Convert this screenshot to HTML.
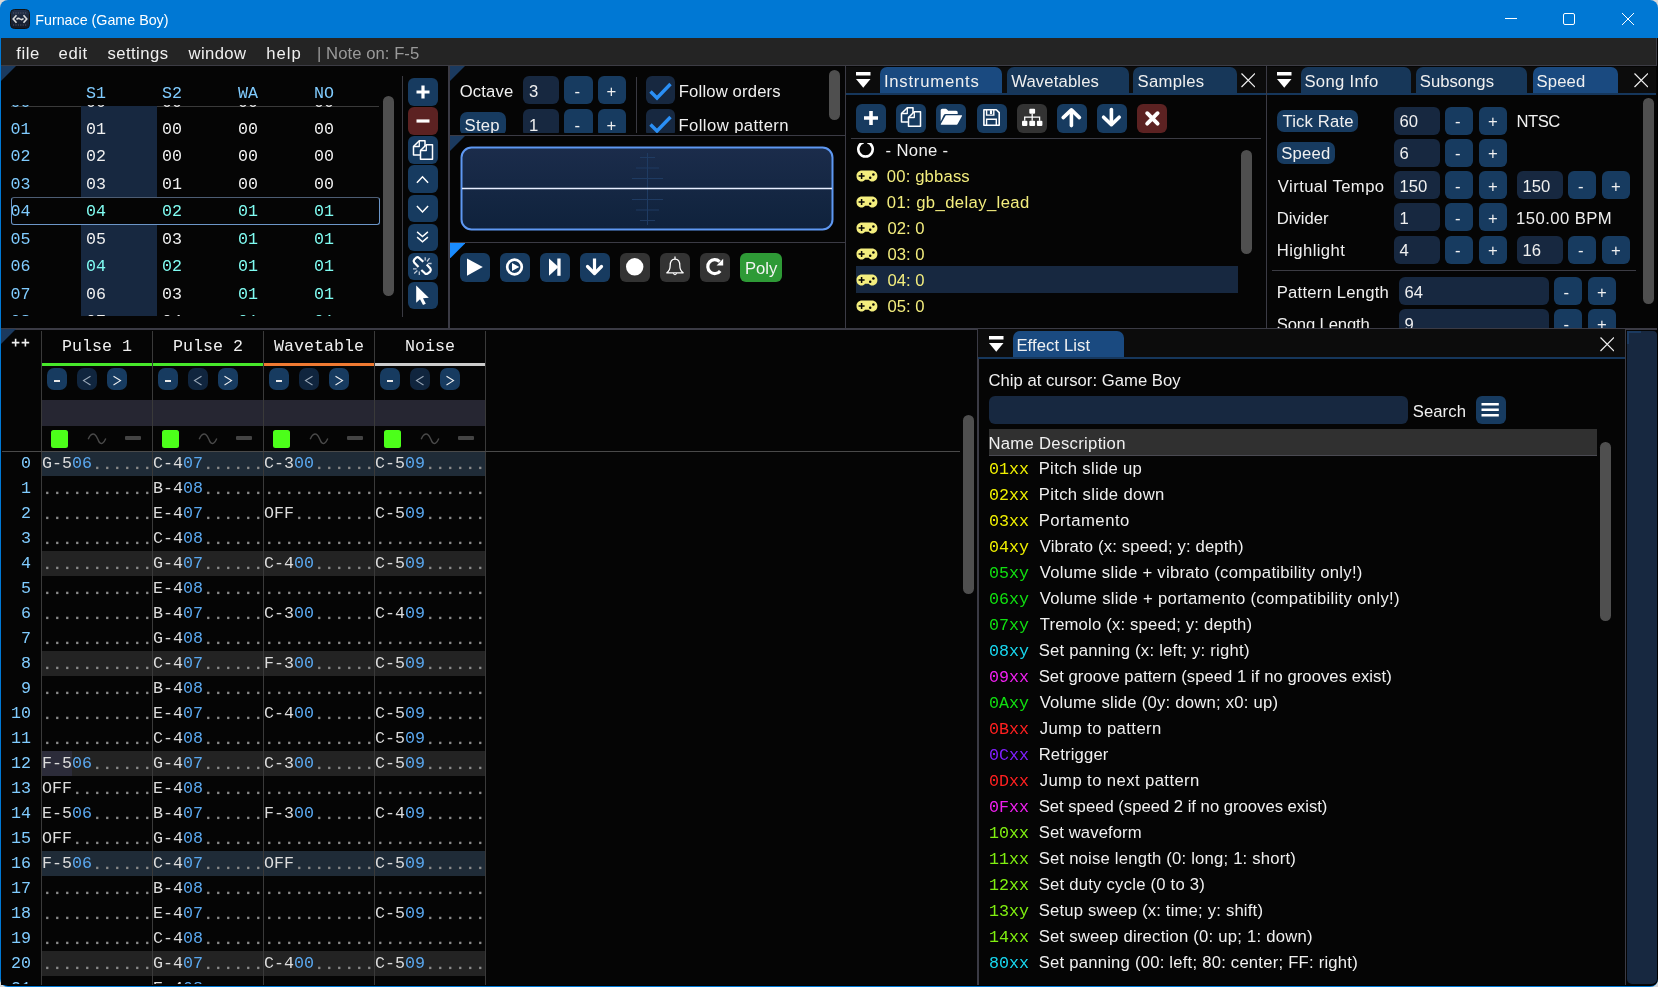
<!DOCTYPE html><html><head><meta charset="utf-8"><style>
html,body{margin:0;padding:0;width:1658px;height:987px;overflow:hidden;background:#d9d9d9}
#root{position:absolute;left:0;top:0;width:1658px;height:987px;overflow:hidden;will-change:transform;-webkit-font-smoothing:antialiased}
#root div{position:absolute;box-sizing:border-box}
.s{font-family:'Liberation Sans',sans-serif;font-size:16.67px;line-height:20px;white-space:pre}
.m{font-family:'Liberation Mono',monospace;font-size:16.67px;line-height:20px;white-space:pre}
.clip{overflow:hidden}
</style></head><body><div id="root">
<div style="left:0px;top:0px;width:1658px;height:987px;background:#0078d4;border-radius:8px;"></div>
<div style="left:1px;top:38px;width:1657px;height:947.5px;background:#000000;border-radius:0 0 7px 7px;"></div>
<div style="left:1px;top:38px;width:1656px;height:947px;background:#050505;border-radius:0 0 7px 0;"></div>
<svg style="position:absolute;left:10px;top:9px;" width="20" height="20" viewBox="0 0 20 20"><defs><linearGradient id="ig" x1="0" y1="0" x2="0" y2="1"><stop offset="0" stop-color="#22304a"/><stop offset="1" stop-color="#141a28"/></linearGradient></defs>
<rect x="0.5" y="0.5" width="19" height="19" rx="4" fill="url(#ig)" stroke="#111" stroke-width="1"/>
<path d="M6.5 6.2 L3.2 10 L6.5 13.8 M13.5 6.2 L16.8 10 L13.5 13.8" fill="none" stroke="#ddd" stroke-width="1.6"/>
<path d="M6.5 10.4 Q8.2 8.6 10 10 Q11.8 11.4 13.5 9.6" fill="none" stroke="#ddd" stroke-width="1.5"/>
<path d="M3 4 H17 M3 16 H17" stroke="#667" stroke-width="0.8" stroke-dasharray="1.2 1.2"/></svg>
<div class="s" style="left:35.3px;top:9.6px;color:#ffffff;font-size:14.3px;letter-spacing:-0.018px;">Furnace (Game Boy)</div>
<div style="left:1505px;top:18px;width:12px;height:1px;background:#ffffff;"></div>
<svg style="position:absolute;left:1562px;top:12px;" width="14" height="14" viewBox="0 0 14 14"><rect x="1.5" y="1.5" width="11" height="11" rx="1.5" fill="none" stroke="#fff" stroke-width="1"/></svg>
<svg style="position:absolute;left:1621px;top:12px;" width="14" height="14" viewBox="0 0 14 14"><path d="M1 1 L13 13 M13 1 L1 13" stroke="#fff" stroke-width="1"/></svg>
<div style="left:1px;top:38px;width:1656px;height:27px;background:#242424;"></div>
<div style="left:1px;top:65px;width:1656px;height:1px;background:#3c3c44;"></div>
<div style="left:1656px;top:38px;width:1px;height:28px;background:#3c3c44;"></div>
<div class="s" style="left:16.2px;top:43.6px;color:#f0f0f0;letter-spacing:0.600px;">file</div>
<div class="s" style="left:58.6px;top:43.6px;color:#f0f0f0;letter-spacing:0.533px;">edit</div>
<div class="s" style="left:107.4px;top:43.6px;color:#f0f0f0;letter-spacing:0.471px;">settings</div>
<div class="s" style="left:188.6px;top:43.6px;color:#f0f0f0;letter-spacing:0.360px;">window</div>
<div class="s" style="left:266.3px;top:43.6px;color:#f0f0f0;letter-spacing:0.967px;">help</div>
<div class="s" style="left:317px;top:43.6px;color:#9a9a9a;letter-spacing:0.054px;">| Note on: F-5</div>
<div style="left:448px;top:66px;width:1.5px;height:263px;background:#3b3b45;"></div>
<div style="left:844.5px;top:66px;width:1.5px;height:263px;background:#3b3b45;"></div>
<div style="left:1265.5px;top:66px;width:1.5px;height:263px;background:#3b3b45;"></div>
<div style="left:449px;top:134.5px;width:396px;height:1px;background:#3b3b45;"></div>
<div style="left:449px;top:241.5px;width:396px;height:1px;background:#3b3b45;"></div>
<div style="left:1px;top:328px;width:1656px;height:2px;background:#3b3b45;"></div>
<div style="left:977px;top:329px;width:1.8px;height:656px;background:#3b3b45;"></div>
<div style="left:1624.5px;top:329px;width:1.5px;height:656px;background:#3b3b45;"></div>
<svg style="position:absolute;left:1px;top:66px;" width="15" height="15" viewBox="0 0 15 15"><polygon points="0,0 15,0 0,15" fill="#1b3a5f"/></svg>
<div class="m" style="left:86px;top:84.0px;color:#80ccff;">S1</div>
<div class="m" style="left:162px;top:84.0px;color:#80ccff;">S2</div>
<div class="m" style="left:238px;top:84.0px;color:#80ccff;">WA</div>
<div class="m" style="left:314px;top:84.0px;color:#80ccff;">NO</div>
<div style="left:11px;top:105.5px;width:368px;height:1px;background:#3a3a3a;"></div>
<div class="clip" style="left:0px;top:105px;width:400px;height:211.3px;">
<div style="left:81px;top:1px;width:76px;height:92px;background:#172840;"></div>
<div style="left:81px;top:120px;width:76px;height:91px;background:#172840;"></div>
<div class="m" style="left:10.5px;top:-12.5px;color:#80ccff">00</div>
<div class="m" style="left:86px;top:-12.5px;color:#f0f0f0">00</div>
<div class="m" style="left:162px;top:-12.5px;color:#f0f0f0">00</div>
<div class="m" style="left:238px;top:-12.5px;color:#f0f0f0">00</div>
<div class="m" style="left:314px;top:-12.5px;color:#f0f0f0">00</div>
<div class="m" style="left:10.5px;top:15.0px;color:#80ccff">01</div>
<div class="m" style="left:86px;top:15.0px;color:#f0f0f0">01</div>
<div class="m" style="left:162px;top:15.0px;color:#f0f0f0">00</div>
<div class="m" style="left:238px;top:15.0px;color:#f0f0f0">00</div>
<div class="m" style="left:314px;top:15.0px;color:#f0f0f0">00</div>
<div class="m" style="left:10.5px;top:42.4px;color:#80ccff">02</div>
<div class="m" style="left:86px;top:42.4px;color:#f0f0f0">02</div>
<div class="m" style="left:162px;top:42.4px;color:#f0f0f0">00</div>
<div class="m" style="left:238px;top:42.4px;color:#f0f0f0">00</div>
<div class="m" style="left:314px;top:42.4px;color:#f0f0f0">00</div>
<div class="m" style="left:10.5px;top:69.9px;color:#80ccff">03</div>
<div class="m" style="left:86px;top:69.9px;color:#f0f0f0">03</div>
<div class="m" style="left:162px;top:69.9px;color:#f0f0f0">01</div>
<div class="m" style="left:238px;top:69.9px;color:#f0f0f0">00</div>
<div class="m" style="left:314px;top:69.9px;color:#f0f0f0">00</div>
<div class="m" style="left:10.5px;top:97.3px;color:#80ccff">04</div>
<div class="m" style="left:86px;top:97.3px;color:#80fcf2">04</div>
<div class="m" style="left:162px;top:97.3px;color:#80fcf2">02</div>
<div class="m" style="left:238px;top:97.3px;color:#80fcf2">01</div>
<div class="m" style="left:314px;top:97.3px;color:#80fcf2">01</div>
<div class="m" style="left:10.5px;top:124.8px;color:#80ccff">05</div>
<div class="m" style="left:86px;top:124.8px;color:#f0f0f0">05</div>
<div class="m" style="left:162px;top:124.8px;color:#f0f0f0">03</div>
<div class="m" style="left:238px;top:124.8px;color:#80fcf2">01</div>
<div class="m" style="left:314px;top:124.8px;color:#80fcf2">01</div>
<div class="m" style="left:10.5px;top:152.2px;color:#80ccff">06</div>
<div class="m" style="left:86px;top:152.2px;color:#80fcf2">04</div>
<div class="m" style="left:162px;top:152.2px;color:#80fcf2">02</div>
<div class="m" style="left:238px;top:152.2px;color:#80fcf2">01</div>
<div class="m" style="left:314px;top:152.2px;color:#80fcf2">01</div>
<div class="m" style="left:10.5px;top:179.7px;color:#80ccff">07</div>
<div class="m" style="left:86px;top:179.7px;color:#f0f0f0">06</div>
<div class="m" style="left:162px;top:179.7px;color:#f0f0f0">03</div>
<div class="m" style="left:238px;top:179.7px;color:#80fcf2">01</div>
<div class="m" style="left:314px;top:179.7px;color:#80fcf2">01</div>
<div class="m" style="left:10.5px;top:207.1px;color:#80ccff">08</div>
<div class="m" style="left:86px;top:207.1px;color:#f0f0f0">07</div>
<div class="m" style="left:162px;top:207.1px;color:#f0f0f0">04</div>
<div class="m" style="left:238px;top:207.1px;color:#80fcf2">01</div>
<div class="m" style="left:314px;top:207.1px;color:#80fcf2">01</div>
</div>
<div style="left:11px;top:197.3px;width:369px;height:27.6px;background:transparent;border-radius:3px;border:1px solid #6c96c8;border-top:1.8px solid #4d5d74;"></div>
<div style="left:383px;top:96px;width:11px;height:200px;background:#4f4f4f;border-radius:5.5px;"></div>
<div style="left:402px;top:76px;width:1px;height:241px;background:#3a3a42;"></div>
<div style="left:408.3px;top:78px;width:29.4px;height:27.6px;background:#173b60;border-radius:6px;"></div>
<div style="left:408.3px;top:107px;width:29.4px;height:27.6px;background:#5c2222;border-radius:6px;"></div>
<div style="left:408.3px;top:136px;width:29.4px;height:27.6px;background:#173b60;border-radius:6px;"></div>
<div style="left:408.3px;top:165.2px;width:29.4px;height:27.6px;background:#173b60;border-radius:6px;"></div>
<div style="left:408.3px;top:194.5px;width:29.4px;height:27.6px;background:#173b60;border-radius:6px;"></div>
<div style="left:408.3px;top:223.7px;width:29.4px;height:27.6px;background:#173b60;border-radius:6px;"></div>
<div style="left:408.3px;top:252.8px;width:29.4px;height:27.6px;background:#173b60;border-radius:6px;"></div>
<div style="left:408.3px;top:281.7px;width:29.4px;height:27.6px;background:#173b60;border-radius:6px;"></div>
<svg style="position:absolute;left:408px;top:78px;" width="30" height="28" viewBox="0 0 30 28"><path d="M15 7.5 V20.5 M8.5 14 H21.5" stroke="#fff" stroke-width="3.2"/></svg>
<svg style="position:absolute;left:408px;top:107px;" width="30" height="28" viewBox="0 0 30 28"><path d="M8.5 14 H21.5" stroke="#fff" stroke-width="3.2"/></svg>
<svg style="position:absolute;left:408px;top:136px;" width="30" height="28" viewBox="0 0 30 28"><path d="M5.5 10.5 L11.3 4.7 H17 V19 H5.5 Z" fill="none" stroke="#fff" stroke-width="1.5" stroke-linejoin="round"/><path d="M5.5 10.5 H11.3 V4.7" fill="none" stroke="#fff" stroke-width="1.3" stroke-linejoin="round"/><path d="M12.5 14.5 L18.3 8.7 H24.5 V23.3 H12.5 Z" fill="#173b60" stroke="#fff" stroke-width="1.5" stroke-linejoin="round"/><path d="M12.5 14.5 H18.3 V8.7" fill="none" stroke="#fff" stroke-width="1.3" stroke-linejoin="round"/></svg>
<svg style="position:absolute;left:408px;top:165.2px;" width="30" height="28" viewBox="0 0 30 28"><path d="M8.9 17.7 L14.5 11.8 L20.1 17.7" fill="none" stroke="#fff" stroke-width="1.5"/></svg>
<svg style="position:absolute;left:408px;top:194.5px;" width="30" height="28" viewBox="0 0 30 28"><path d="M8.9 11 L14.5 16.9 L20.1 11" fill="none" stroke="#fff" stroke-width="1.5"/></svg>
<svg style="position:absolute;left:408px;top:223.7px;" width="30" height="28" viewBox="0 0 30 28"><path d="M9.1 7.9 L14.5 12.6 L19.9 7.9 M9.1 13.1 L14.5 17.8 L19.9 13.1" fill="none" stroke="#fff" stroke-width="1.4"/></svg>
<svg style="position:absolute;left:408px;top:252.8px;" width="30" height="28" viewBox="0 0 30 28"><path d="M15.3 8.8 L11 4.9 Q9.6 3.7 8.1 4.7 L6.3 6.5 Q5.1 7.9 6.2 9.4 L10.5 13.9" fill="none" stroke="#fff" stroke-width="2.2" stroke-linejoin="round"/><path d="M18.7 11.6 L22.4 15.6 Q23.4 17.1 22.2 18.6 L19.6 20.6 Q18.2 21.4 16.9 20.3 L13.3 17" fill="none" stroke="#fff" stroke-width="2.2" stroke-linejoin="round"/><path d="M17.2 4.2 V7.4 M21.6 5.2 L19 8.5 M19.8 10.5 H23.6 M5 15.9 H8.6 M6.2 20.4 L9.4 17.6 M11.3 18.4 V21.9" stroke="#c0cad8" stroke-width="1.3"/></svg>
<svg style="position:absolute;left:408px;top:281.7px;" width="30" height="28" viewBox="0 0 30 28"><path d="M8.2 3.5 L8.2 20.8 L12 17.2 L15 23 L17.8 21.8 L15 16.2 L20.8 15.8 Z" fill="#fff"/></svg>
<svg style="position:absolute;left:449.5px;top:66px;" width="15" height="15" viewBox="0 0 15 15"><polygon points="0,0 15,0 0,15" fill="#1b3a5f"/></svg>
<div class="clip" style="left:449.5px;top:66px;width:395px;height:67.3px;">
<div class="s" style="left:10.199999999999989px;top:16.0px;color:#f0f0f0;letter-spacing:0.160px;">Octave</div>
<div style="left:73.5px;top:10px;width:36px;height:28px;background:#172840;border-radius:6px;"></div>
<div class="s" style="left:79.5px;top:16.0px;color:#f0f0f0;">3</div>
<div style="left:114.5px;top:10px;width:28.5px;height:28px;background:#173b60;border-radius:6px;"></div>
<div class="s" style="left:125.0px;top:16.0px;color:#f0f0f0;">-</div>
<div style="left:148.0px;top:10px;width:28.5px;height:28px;background:#173b60;border-radius:6px;"></div>
<div class="s" style="left:157.0px;top:16.0px;color:#f0f0f0;">+</div>
<div style="left:10.5px;top:46px;width:45.5px;height:24px;background:#173b60;border-radius:7px;"></div>
<div class="s" style="left:15.0px;top:49.5px;color:#f0f0f0;letter-spacing:0.267px;">Step</div>
<div style="left:73.5px;top:43px;width:36px;height:28px;background:#172840;border-radius:6px;"></div>
<div class="s" style="left:79.5px;top:49.5px;color:#f0f0f0;">1</div>
<div style="left:114.5px;top:43px;width:28.5px;height:28px;background:#173b60;border-radius:6px;"></div>
<div class="s" style="left:125.0px;top:49.5px;color:#f0f0f0;">-</div>
<div style="left:148.0px;top:43px;width:28.5px;height:28px;background:#173b60;border-radius:6px;"></div>
<div class="s" style="left:157.0px;top:49.5px;color:#f0f0f0;">+</div>
<div style="left:186.5px;top:11px;width:1px;height:57px;background:#3a3a42;"></div>
<div style="left:196.5px;top:10px;width:28.5px;height:28px;background:#172840;border-radius:6px;"></div>
<svg style="position:absolute;left:196.5px;top:10px" width="29" height="28"><path d="M4.5 15.5 L11 22 L24.5 8" fill="none" stroke="#2a8ff5" stroke-width="3.4"/></svg>
<div class="s" style="left:229.29999999999995px;top:16.2px;color:#f0f0f0;letter-spacing:0.150px;">Follow orders</div>
<div style="left:196.5px;top:43px;width:28.5px;height:28px;background:#172840;border-radius:6px;"></div>
<svg style="position:absolute;left:196.5px;top:43px" width="29" height="28"><path d="M4.5 15.5 L11 22 L24.5 8" fill="none" stroke="#2a8ff5" stroke-width="3.4"/></svg>
<div class="s" style="left:228.89999999999998px;top:49.5px;color:#f0f0f0;letter-spacing:0.431px;">Follow pattern</div>
<div style="left:379.5px;top:3.5px;width:11px;height:50.5px;background:#4f4f4f;border-radius:5.5px;"></div>
</div>
<svg style="position:absolute;left:449.5px;top:135.5px;" width="15" height="15" viewBox="0 0 15 15"><polygon points="0,0 15,0 0,15" fill="#1b3a5f"/></svg>
<svg style="position:absolute;left:460px;top:146px;" width="374" height="85" viewBox="0 0 374 85"><defs><linearGradient id="og" x1="0" y1="0" x2="0" y2="1"><stop offset="0" stop-color="#1b2c4b"/><stop offset="1" stop-color="#0f223c"/></linearGradient></defs>
<rect x="1.5" y="1.5" width="371" height="82" rx="10" fill="url(#og)" stroke="#5e98f2" stroke-width="2"/>
<g stroke="#1f3b62" stroke-width="1">
<path d="M187.5 7 V79"/>
<path d="M180 11.5 H195 M176 22 H199 M172 32.5 H203 M172 53.5 H203 M176 64 H199 M180 74.5 H195"/>
</g>
<path d="M2 42.5 H372" stroke="#e8eeff" stroke-width="1.6"/></svg>
<svg style="position:absolute;left:449.5px;top:242.5px;" width="15.5" height="15.5" viewBox="0 0 15.5 15.5"><polygon points="0,0 15.5,0 0,15.5" fill="#1a8cff"/></svg>
<div style="left:460px;top:253px;width:30px;height:28.5px;background:#173b60;border-radius:6px;"></div>
<div style="left:500px;top:253px;width:30px;height:28.5px;background:#173b60;border-radius:6px;"></div>
<div style="left:540px;top:253px;width:30px;height:28.5px;background:#173b60;border-radius:6px;"></div>
<div style="left:580px;top:253px;width:30px;height:28.5px;background:#173b60;border-radius:6px;"></div>
<div style="left:620px;top:253px;width:30px;height:28.5px;background:#333333;border-radius:6px;"></div>
<div style="left:660px;top:253px;width:30px;height:28.5px;background:#333333;border-radius:6px;"></div>
<div style="left:700px;top:253px;width:30px;height:28.5px;background:#333333;border-radius:6px;"></div>
<svg style="position:absolute;left:460px;top:253px;" width="30" height="28.5" viewBox="0 0 30 28.5"><path d="M7 5.5 L22.8 14 L7 22.8 Z" fill="#fff"/></svg>
<svg style="position:absolute;left:500px;top:253px;" width="30" height="28.5" viewBox="0 0 30 28.5"><circle cx="14.5" cy="14" r="7.3" fill="none" stroke="#fff" stroke-width="2.7"/><path d="M12 9.9 L19.3 14 L12 18.1 Z" fill="#fff"/></svg>
<svg style="position:absolute;left:540px;top:253px;" width="30" height="28.5" viewBox="0 0 30 28.5"><path d="M9 5.5 L18.5 14 L9 22.8 Z" fill="#fff"/><rect x="17.3" y="5.5" width="3.3" height="17.3" fill="#fff"/></svg>
<svg style="position:absolute;left:580px;top:253px;" width="30" height="28.5" viewBox="0 0 30 28.5"><path d="M14.5 5.5 V20" stroke="#fff" stroke-width="3.2"/><path d="M7.5 13.5 L14.5 20.5 L21.5 13.5" fill="none" stroke="#fff" stroke-width="3.2" stroke-linejoin="round" stroke-linecap="round"/></svg>
<svg style="position:absolute;left:620px;top:253px;" width="30" height="28.5" viewBox="0 0 30 28.5"><circle cx="14.7" cy="13.8" r="8.7" fill="#fff"/></svg>
<svg style="position:absolute;left:660px;top:253px;" width="30" height="28.5" viewBox="0 0 30 28.5"><path d="M15 6 C11.2 6 10.2 9.5 10.2 12.5 C10.2 16.2 9 18.2 6.8 19.8 H23.2 C21 18.2 19.8 16.2 19.8 12.5 C19.8 9.5 18.8 6 15 6 Z" fill="none" stroke="#fff" stroke-width="1.25" stroke-linejoin="round"/><path d="M15 3.6 V6" stroke="#fff" stroke-width="1.3"/><path d="M13.3 20.2 Q15 23.2 16.7 20.2" fill="none" stroke="#fff" stroke-width="1.1"/></svg>
<svg style="position:absolute;left:700px;top:253px;" width="30" height="28.5" viewBox="0 0 30 28.5"><path d="M20.2 17.9 A6.95 6.95 0 1 1 19.6 8.6" fill="none" stroke="#fff" stroke-width="3.2"/><path d="M23.2 5.8 V12.4 H16.6 Z" fill="#fff"/></svg>
<div style="left:740px;top:253px;width:42px;height:28.5px;background:#2e9a36;border-radius:6px;"></div>
<div class="s" style="left:745px;top:259.0px;color:#f4f4f4;">Poly</div>
<div style="left:846px;top:66.5px;width:419.5px;height:27px;background:#0c0c0c;"></div>
<svg style="position:absolute;left:856px;top:72px;" width="15" height="17" viewBox="0 0 15 17"><rect x="0" y="0" width="14.5" height="3.5" fill="#fff"/><path d="M0 7 H14.5 L7.25 15.8 Z" fill="#fff"/></svg>
<div style="left:879.5px;top:67px;width:122px;height:26.5px;background:#1a4a80;border-radius:7px 7px 0 0;"></div>
<div class="s" style="left:883.9px;top:72.0px;color:#f0f0f0;letter-spacing:0.780px;">Instruments</div>
<div style="left:1006.5px;top:67px;width:122px;height:26.5px;background:#173759;border-radius:7px 7px 0 0;"></div>
<div class="s" style="left:1011.2px;top:72.0px;color:#f0f0f0;letter-spacing:0.144px;">Wavetables</div>
<div style="left:1133px;top:67px;width:103.5px;height:26.5px;background:#173759;border-radius:7px 7px 0 0;"></div>
<div class="s" style="left:1137.5px;top:72.0px;color:#f0f0f0;letter-spacing:0.300px;">Samples</div>
<svg style="position:absolute;left:1240.7px;top:73px;" width="14.5" height="14.5" viewBox="0 0 14.5 14.5"><path d="M0.5 0.5 L14.0 14.0 M14.0 0.5 L0.5 14.0" stroke="#f0f0f0" stroke-width="1.2"/></svg>
<div style="left:846px;top:93px;width:419.5px;height:2px;background:#16375c;"></div>
<div style="left:856px;top:104.3px;width:30px;height:28.4px;background:#173b60;border-radius:6px;"></div>
<div style="left:896px;top:104.3px;width:30px;height:28.4px;background:#173b60;border-radius:6px;"></div>
<div style="left:936.2px;top:104.3px;width:30px;height:28.4px;background:#173b60;border-radius:6px;"></div>
<div style="left:977px;top:104.3px;width:30px;height:28.4px;background:#173b60;border-radius:6px;"></div>
<div style="left:1017px;top:104.3px;width:30px;height:28.4px;background:#333333;border-radius:6px;"></div>
<div style="left:1057px;top:104.3px;width:30px;height:28.4px;background:#173b60;border-radius:6px;"></div>
<div style="left:1097px;top:104.3px;width:30px;height:28.4px;background:#173b60;border-radius:6px;"></div>
<div style="left:1137px;top:104.3px;width:30px;height:28.4px;background:#5c2222;border-radius:6px;"></div>
<svg style="position:absolute;left:856px;top:104.3px;" width="30" height="28.5" viewBox="0 0 30 28.5"><path d="M15 7 V21 M8 14 H22" stroke="#fff" stroke-width="3.6"/></svg>
<svg style="position:absolute;left:896px;top:104.3px;" width="30" height="28.5" viewBox="0 0 30 28.5"><g transform="translate(0,-1)"><path d="M5.5 10.5 L11.3 4.7 H17 V19 H5.5 Z" fill="none" stroke="#fff" stroke-width="1.5" stroke-linejoin="round"/><path d="M5.5 10.5 H11.3 V4.7" fill="none" stroke="#fff" stroke-width="1.3" stroke-linejoin="round"/><path d="M12.5 14.5 L18.3 8.7 H24.5 V23.3 H12.5 Z" fill="#173b60" stroke="#fff" stroke-width="1.5" stroke-linejoin="round"/><path d="M12.5 14.5 H18.3 V8.7" fill="none" stroke="#fff" stroke-width="1.3" stroke-linejoin="round"/></g></svg>
<svg style="position:absolute;left:936.2px;top:104.3px;" width="30" height="28.5" viewBox="0 0 30 28.5"><path d="M4.7 6.3 Q4.7 4.7 6.3 4.7 H9.6 Q10.4 4.7 11 5.4 L12.2 6.8 H20.2 Q21.7 6.8 21.7 8.3 V10 H9.6 Q8.4 10 7.8 11 L4.7 17.6 Z" fill="#fff"/><path d="M9.8 11.3 H25.6 Q26.4 11.3 26 12.1 L21.6 20.1 Q21.3 20.7 20.6 20.7 H5.2 Q4.5 20.7 4.8 20.1 Z" fill="#fff"/></svg>
<svg style="position:absolute;left:977px;top:104.3px;" width="30" height="28.5" viewBox="0 0 30 28.5"><path d="M6.9 5.7 H19.3 L22.2 8.6 V21.3 H6.9 Z" fill="none" stroke="#fff" stroke-width="1.6" stroke-linejoin="round"/><path d="M9.6 5.7 V11.1 H16.8 V5.7" fill="none" stroke="#fff" stroke-width="1.4"/><rect x="12.9" y="6.2" width="2.2" height="3.8" fill="#fff"/><path d="M9.6 21.3 V15.2 H19.3 V21.3" fill="none" stroke="#fff" stroke-width="1.4"/></svg>
<svg style="position:absolute;left:1017px;top:104.3px;" width="30" height="28.5" viewBox="0 0 30 28.5"><rect x="12.3" y="4.7" width="5.8" height="5.1" rx="1" fill="#fff"/><path d="M15.2 9.8 V13.2 M7.7 16.7 V13.2 H22.6 V16.7 M15.2 13.2 V16.7" fill="none" stroke="#fff" stroke-width="1.3"/><rect x="5" y="16.7" width="5.4" height="5.4" rx="1" fill="#fff"/><rect x="12.3" y="16.7" width="5.8" height="5.4" rx="1" fill="#fff"/><rect x="19.9" y="16.7" width="5.5" height="5.4" rx="1" fill="#fff"/></svg>
<svg style="position:absolute;left:1057px;top:104.3px;" width="30" height="28.5" viewBox="0 0 30 28.5"><path d="M14.4 21.6 V7" stroke="#fff" stroke-width="3.6" stroke-linecap="round"/><path d="M6.2 13.6 L14.4 5.9 L22.4 13.6" fill="none" stroke="#fff" stroke-width="3.6" stroke-linejoin="round" stroke-linecap="round"/></svg>
<svg style="position:absolute;left:1097px;top:104.3px;" width="30" height="28.5" viewBox="0 0 30 28.5"><path d="M14.4 5.6 V20" stroke="#fff" stroke-width="3.6" stroke-linecap="round"/><path d="M6.6 13.2 L14.4 20.7 L22.2 13.2" fill="none" stroke="#fff" stroke-width="3.6" stroke-linejoin="round" stroke-linecap="round"/></svg>
<svg style="position:absolute;left:1137px;top:104.3px;" width="30" height="28.5" viewBox="0 0 30 28.5"><path d="M10.2 9.2 L20.6 19.6 M20.6 9.2 L10.2 19.6" stroke="#fff" stroke-width="3.9" stroke-linecap="round"/></svg>
<div style="left:851px;top:138px;width:409.5px;height:1px;background:#3c3c44;"></div>
<div class="clip" style="left:846px;top:143px;width:419px;height:176px;">
<div style="left:9.5px;top:123px;width:382.5px;height:27px;background:#172840;"></div>
<svg style="position:absolute;left:10px;top:-3px;" width="20" height="20" viewBox="0 0 20 20"><path d="M7.6 2.3 A7.2 7.2 0 1 0 11.4 2.3" fill="none" stroke="#fff" stroke-width="2.6"/></svg>
<div class="s" style="left:39.60000000000002px;top:-2.0px;color:#f0f0f0;letter-spacing:0.343px;">- None -</div>
<svg style="position:absolute;left:10px;top:27.19999999999999px;" width="22" height="12" viewBox="0 0 22 12"><path d="M6 0.6 H15.8 C19.2 0.6 21.4 3 21.4 6.1 C21.4 9.3 19.2 11.6 16.3 11.6 C14.6 11.6 13.6 10.6 12.8 9.7 H9 C8.2 10.6 7.2 11.6 5.5 11.6 C2.6 11.6 0.5 9.3 0.5 6.1 C0.5 3 2.7 0.6 6 0.6 Z" fill="#f4ee7e"/><path d="M2.6 6 H8.6 M5.6 3 V9" stroke="#050505" stroke-width="1.5"/><circle cx="14.2" cy="7.7" r="1.25" fill="#050505"/><circle cx="17.4" cy="4.5" r="1.25" fill="#050505"/></svg>
<div class="s" style="left:40.799999999999955px;top:24.0px;color:#f4ee7e;letter-spacing:0.156px;">00: gbbass</div>
<svg style="position:absolute;left:10px;top:53.19999999999999px;" width="22" height="12" viewBox="0 0 22 12"><path d="M6 0.6 H15.8 C19.2 0.6 21.4 3 21.4 6.1 C21.4 9.3 19.2 11.6 16.3 11.6 C14.6 11.6 13.6 10.6 12.8 9.7 H9 C8.2 10.6 7.2 11.6 5.5 11.6 C2.6 11.6 0.5 9.3 0.5 6.1 C0.5 3 2.7 0.6 6 0.6 Z" fill="#f4ee7e"/><path d="M2.6 6 H8.6 M5.6 3 V9" stroke="#050505" stroke-width="1.5"/><circle cx="14.2" cy="7.7" r="1.25" fill="#050505"/><circle cx="17.4" cy="4.5" r="1.25" fill="#050505"/></svg>
<div class="s" style="left:40.799999999999955px;top:50.0px;color:#f4ee7e;letter-spacing:0.394px;">01: gb_delay_lead</div>
<svg style="position:absolute;left:10px;top:79.19999999999999px;" width="22" height="12" viewBox="0 0 22 12"><path d="M6 0.6 H15.8 C19.2 0.6 21.4 3 21.4 6.1 C21.4 9.3 19.2 11.6 16.3 11.6 C14.6 11.6 13.6 10.6 12.8 9.7 H9 C8.2 10.6 7.2 11.6 5.5 11.6 C2.6 11.6 0.5 9.3 0.5 6.1 C0.5 3 2.7 0.6 6 0.6 Z" fill="#f4ee7e"/><path d="M2.6 6 H8.6 M5.6 3 V9" stroke="#050505" stroke-width="1.5"/><circle cx="14.2" cy="7.7" r="1.25" fill="#050505"/><circle cx="17.4" cy="4.5" r="1.25" fill="#050505"/></svg>
<div class="s" style="left:41.5px;top:76.0px;color:#f4ee7e;">02: 0</div>
<svg style="position:absolute;left:10px;top:105.19999999999999px;" width="22" height="12" viewBox="0 0 22 12"><path d="M6 0.6 H15.8 C19.2 0.6 21.4 3 21.4 6.1 C21.4 9.3 19.2 11.6 16.3 11.6 C14.6 11.6 13.6 10.6 12.8 9.7 H9 C8.2 10.6 7.2 11.6 5.5 11.6 C2.6 11.6 0.5 9.3 0.5 6.1 C0.5 3 2.7 0.6 6 0.6 Z" fill="#f4ee7e"/><path d="M2.6 6 H8.6 M5.6 3 V9" stroke="#050505" stroke-width="1.5"/><circle cx="14.2" cy="7.7" r="1.25" fill="#050505"/><circle cx="17.4" cy="4.5" r="1.25" fill="#050505"/></svg>
<div class="s" style="left:41.5px;top:102.0px;color:#f4ee7e;">03: 0</div>
<svg style="position:absolute;left:10px;top:131.2px;" width="22" height="12" viewBox="0 0 22 12"><path d="M6 0.6 H15.8 C19.2 0.6 21.4 3 21.4 6.1 C21.4 9.3 19.2 11.6 16.3 11.6 C14.6 11.6 13.6 10.6 12.8 9.7 H9 C8.2 10.6 7.2 11.6 5.5 11.6 C2.6 11.6 0.5 9.3 0.5 6.1 C0.5 3 2.7 0.6 6 0.6 Z" fill="#f4ee7e"/><path d="M2.6 6 H8.6 M5.6 3 V9" stroke="#050505" stroke-width="1.5"/><circle cx="14.2" cy="7.7" r="1.25" fill="#050505"/><circle cx="17.4" cy="4.5" r="1.25" fill="#050505"/></svg>
<div class="s" style="left:41.5px;top:128.0px;color:#f4ee7e;">04: 0</div>
<svg style="position:absolute;left:10px;top:157.2px;" width="22" height="12" viewBox="0 0 22 12"><path d="M6 0.6 H15.8 C19.2 0.6 21.4 3 21.4 6.1 C21.4 9.3 19.2 11.6 16.3 11.6 C14.6 11.6 13.6 10.6 12.8 9.7 H9 C8.2 10.6 7.2 11.6 5.5 11.6 C2.6 11.6 0.5 9.3 0.5 6.1 C0.5 3 2.7 0.6 6 0.6 Z" fill="#f4ee7e"/><path d="M2.6 6 H8.6 M5.6 3 V9" stroke="#050505" stroke-width="1.5"/><circle cx="14.2" cy="7.7" r="1.25" fill="#050505"/><circle cx="17.4" cy="4.5" r="1.25" fill="#050505"/></svg>
<div class="s" style="left:41.5px;top:154.0px;color:#f4ee7e;">05: 0</div>
<svg style="position:absolute;left:10px;top:183.2px;" width="22" height="12" viewBox="0 0 22 12"><path d="M6 0.6 H15.8 C19.2 0.6 21.4 3 21.4 6.1 C21.4 9.3 19.2 11.6 16.3 11.6 C14.6 11.6 13.6 10.6 12.8 9.7 H9 C8.2 10.6 7.2 11.6 5.5 11.6 C2.6 11.6 0.5 9.3 0.5 6.1 C0.5 3 2.7 0.6 6 0.6 Z" fill="#f4ee7e"/><path d="M2.6 6 H8.6 M5.6 3 V9" stroke="#050505" stroke-width="1.5"/><circle cx="14.2" cy="7.7" r="1.25" fill="#050505"/><circle cx="17.4" cy="4.5" r="1.25" fill="#050505"/></svg>
<div class="s" style="left:41.5px;top:180.0px;color:#f4ee7e;">06: 0</div>
</div>
<div style="left:1241px;top:150px;width:11px;height:103.5px;background:#4f4f4f;border-radius:5.5px;"></div>
<div style="left:1267px;top:66.5px;width:389px;height:27px;background:#0c0c0c;"></div>
<svg style="position:absolute;left:1277px;top:72.3px;" width="15" height="17" viewBox="0 0 15 17"><rect x="0" y="0" width="14.5" height="3.5" fill="#fff"/><path d="M0 7 H14.5 L7.25 15.8 Z" fill="#fff"/></svg>
<div style="left:1300.5px;top:67px;width:110.5px;height:26.5px;background:#173759;border-radius:7px 7px 0 0;"></div>
<div class="s" style="left:1304.4px;top:72.0px;color:#f0f0f0;letter-spacing:0.325px;">Song Info</div>
<div style="left:1415.5px;top:67px;width:111.5px;height:26.5px;background:#173759;border-radius:7px 7px 0 0;"></div>
<div class="s" style="left:1419.8px;top:72.0px;color:#f0f0f0;letter-spacing:0.014px;">Subsongs</div>
<div style="left:1532.5px;top:67px;width:85.5px;height:26.5px;background:#1a4a80;border-radius:7px 7px 0 0;"></div>
<div class="s" style="left:1536.6px;top:72.0px;color:#f0f0f0;letter-spacing:0.100px;">Speed</div>
<svg style="position:absolute;left:1633.5px;top:73.2px;" width="14.5" height="14.5" viewBox="0 0 14.5 14.5"><path d="M0.5 0.5 L14.0 14.0 M14.0 0.5 L0.5 14.0" stroke="#f0f0f0" stroke-width="1.2"/></svg>
<div style="left:1267px;top:93px;width:389px;height:2px;background:#16375c;"></div>
<div class="clip" style="left:1267px;top:95px;width:390px;height:232.5px;">
<div style="left:10px;top:14.700000000000003px;width:81px;height:22.5px;background:#173b60;border-radius:7px;"></div>
<div class="s" style="left:15.5px;top:17.2px;color:#f0f0f0;letter-spacing:0.150px;">Tick Rate</div>
<div style="left:127px;top:11.700000000000003px;width:46px;height:28px;background:#172840;border-radius:6px;"></div>
<div class="s" style="left:132.5px;top:17.2px;color:#f0f0f0;">60</div>
<div style="left:178.29999999999995px;top:11.700000000000003px;width:28px;height:28px;background:#173b60;border-radius:6px;"></div>
<div class="s" style="left:188px;top:17.2px;color:#f0f0f0;">-</div>
<div style="left:211.79999999999995px;top:11.700000000000003px;width:28px;height:28px;background:#173b60;border-radius:6px;"></div>
<div class="s" style="left:221px;top:17.2px;color:#f0f0f0;">+</div>
<div class="s" style="left:249.5999999999999px;top:17.2px;color:#f0f0f0;letter-spacing:-0.533px;">NTSC</div>
<div style="left:10px;top:46.94999999999999px;width:58px;height:22.5px;background:#173b60;border-radius:7px;"></div>
<div class="s" style="left:14.200000000000045px;top:49.4px;color:#f0f0f0;letter-spacing:0.250px;">Speed</div>
<div style="left:127px;top:43.94999999999999px;width:46px;height:28px;background:#172840;border-radius:6px;"></div>
<div class="s" style="left:132.5px;top:49.4px;color:#f0f0f0;">6</div>
<div style="left:178.29999999999995px;top:43.94999999999999px;width:28px;height:28px;background:#173b60;border-radius:6px;"></div>
<div class="s" style="left:188px;top:49.4px;color:#f0f0f0;">-</div>
<div style="left:211.79999999999995px;top:43.94999999999999px;width:28px;height:28px;background:#173b60;border-radius:6px;"></div>
<div class="s" style="left:221px;top:49.4px;color:#f0f0f0;">+</div>
<div class="s" style="left:10.799999999999955px;top:81.7px;color:#f0f0f0;letter-spacing:0.425px;">Virtual Tempo</div>
<div style="left:127px;top:76.19999999999999px;width:46px;height:28px;background:#172840;border-radius:6px;"></div>
<div class="s" style="left:132.5px;top:81.7px;color:#f0f0f0;">150</div>
<div style="left:178.29999999999995px;top:76.19999999999999px;width:28px;height:28px;background:#173b60;border-radius:6px;"></div>
<div class="s" style="left:188px;top:81.7px;color:#f0f0f0;">-</div>
<div style="left:211.79999999999995px;top:76.19999999999999px;width:28px;height:28px;background:#173b60;border-radius:6px;"></div>
<div class="s" style="left:221px;top:81.7px;color:#f0f0f0;">+</div>
<div style="left:250px;top:76.19999999999999px;width:45.5px;height:28px;background:#172840;border-radius:6px;"></div>
<div class="s" style="left:255.5px;top:81.7px;color:#f0f0f0;">150</div>
<div style="left:301.29999999999995px;top:76.19999999999999px;width:28px;height:28px;background:#173b60;border-radius:6px;"></div>
<div class="s" style="left:311px;top:81.7px;color:#f0f0f0;">-</div>
<div style="left:335px;top:76.19999999999999px;width:28px;height:28px;background:#173b60;border-radius:6px;"></div>
<div class="s" style="left:344px;top:81.7px;color:#f0f0f0;">+</div>
<div class="s" style="left:9.799999999999955px;top:113.9px;color:#f0f0f0;">Divider</div>
<div style="left:127px;top:108.44999999999999px;width:46px;height:28px;background:#172840;border-radius:6px;"></div>
<div class="s" style="left:132.5px;top:113.9px;color:#f0f0f0;">1</div>
<div style="left:178.29999999999995px;top:108.44999999999999px;width:28px;height:28px;background:#173b60;border-radius:6px;"></div>
<div class="s" style="left:188px;top:113.9px;color:#f0f0f0;">-</div>
<div style="left:211.79999999999995px;top:108.44999999999999px;width:28px;height:28px;background:#173b60;border-radius:6px;"></div>
<div class="s" style="left:221px;top:113.9px;color:#f0f0f0;">+</div>
<div class="s" style="left:249.0999999999999px;top:113.9px;color:#f0f0f0;letter-spacing:0.433px;">150.00 BPM</div>
<div class="s" style="left:9.799999999999955px;top:146.2px;color:#f0f0f0;letter-spacing:0.400px;">Highlight</div>
<div style="left:127px;top:140.7px;width:46px;height:28px;background:#172840;border-radius:6px;"></div>
<div class="s" style="left:132.5px;top:146.2px;color:#f0f0f0;">4</div>
<div style="left:178.29999999999995px;top:140.7px;width:28px;height:28px;background:#173b60;border-radius:6px;"></div>
<div class="s" style="left:188px;top:146.2px;color:#f0f0f0;">-</div>
<div style="left:211.79999999999995px;top:140.7px;width:28px;height:28px;background:#173b60;border-radius:6px;"></div>
<div class="s" style="left:221px;top:146.2px;color:#f0f0f0;">+</div>
<div style="left:250px;top:140.7px;width:45.5px;height:28px;background:#172840;border-radius:6px;"></div>
<div class="s" style="left:255.5px;top:146.2px;color:#f0f0f0;">16</div>
<div style="left:301.29999999999995px;top:140.7px;width:28px;height:28px;background:#173b60;border-radius:6px;"></div>
<div class="s" style="left:311px;top:146.2px;color:#f0f0f0;">-</div>
<div style="left:335px;top:140.7px;width:28px;height:28px;background:#173b60;border-radius:6px;"></div>
<div class="s" style="left:344px;top:146.2px;color:#f0f0f0;">+</div>
<div style="left:5px;top:175px;width:364px;height:1px;background:#3c3c44;"></div>
<div class="s" style="left:9.799999999999955px;top:187.5px;color:#f0f0f0;letter-spacing:0.215px;">Pattern Length</div>
<div style="left:132px;top:182px;width:149.5px;height:28px;background:#172840;border-radius:6px;"></div>
<div class="s" style="left:137.5px;top:187.5px;color:#f0f0f0;">64</div>
<div style="left:287px;top:182px;width:28px;height:28px;background:#173b60;border-radius:6px;"></div>
<div class="s" style="left:296.5px;top:187.5px;color:#f0f0f0;">-</div>
<div style="left:320.70000000000005px;top:182px;width:28px;height:28px;background:#173b60;border-radius:6px;"></div>
<div class="s" style="left:330px;top:187.5px;color:#f0f0f0;">+</div>
<div class="s" style="left:9.799999999999955px;top:219.7px;color:#f0f0f0;letter-spacing:-0.150px;">Song Length</div>
<div style="left:132px;top:214.2px;width:149.5px;height:28px;background:#172840;border-radius:6px;"></div>
<div class="s" style="left:137.5px;top:219.7px;color:#f0f0f0;">9</div>
<div style="left:287px;top:214.2px;width:28px;height:28px;background:#173b60;border-radius:6px;"></div>
<div class="s" style="left:296.5px;top:219.7px;color:#f0f0f0;">-</div>
<div style="left:320.70000000000005px;top:214.2px;width:28px;height:28px;background:#173b60;border-radius:6px;"></div>
<div class="s" style="left:330px;top:219.7px;color:#f0f0f0;">+</div>
</div>
<div style="left:1643px;top:97.5px;width:10.5px;height:206px;background:#4f4f4f;border-radius:5.25px;"></div>
<svg style="position:absolute;left:1px;top:329px;" width="15" height="15" viewBox="0 0 15 15"><polygon points="0,0 15,0 0,15" fill="#1b3a5f"/></svg>
<svg style="position:absolute;left:11px;top:338px;" width="20" height="10" viewBox="0 0 20 10"><path d="M0.8 4.6 H8.4 M4.6 0.8 V8.4 M10.6 4.6 H18.2 M14.4 0.8 V8.4" stroke="#f0f0f0" stroke-width="1.6"/></svg>
<div class="m" style="left:62px;top:337.4px;color:#f0f0f0;">Pulse 1</div>
<div style="left:42px;top:363px;width:110.5px;height:2.7px;background:#47e82a;"></div>
<div style="left:47px;top:368.3px;width:20px;height:22px;background:#173b60;border-radius:7px;"></div>
<div style="left:54px;top:380px;width:6px;height:2px;background:#e8e8e8;"></div>
<div style="left:77px;top:368.3px;width:20px;height:22px;background:#10253e;border-radius:7px;"></div>
<div style="left:107px;top:368.3px;width:20px;height:22px;background:#173b60;border-radius:7px;"></div>
<svg style="position:absolute;left:77px;top:368.3px;" width="20" height="22" viewBox="0 0 20 22"><path d="M13.5 8.2 L6.5 12.6 L13.5 17" fill="none" stroke="#9aa8b8" stroke-width="1.1"/></svg>
<svg style="position:absolute;left:107px;top:368.3px;" width="20" height="22" viewBox="0 0 20 22"><path d="M6.5 8.2 L13.5 12.6 L6.5 17" fill="none" stroke="#f0f0f0" stroke-width="1.1"/></svg>
<div style="left:42px;top:400px;width:110.5px;height:26px;background:#262632;"></div>
<div style="left:51px;top:430px;width:17px;height:17.5px;background:#4cff1a;border-radius:2.5px;"></div>
<svg style="position:absolute;left:87px;top:432px;" width="21" height="14" viewBox="0 0 21 14"><path d="M1.2 7.2 C3 2.5 5.5 1.2 7.6 2.4 C9.6 3.6 10.5 6.5 11.4 8.6 C12.4 11 14 12 15.6 11.2 C17 10.5 18 8.5 18.8 6.6" fill="none" stroke="#4a4a4a" stroke-width="1.4"/></svg>
<div style="left:125px;top:436.3px;width:16px;height:4px;background:#444444;border-radius:1px;"></div>
<div class="m" style="left:173px;top:337.4px;color:#f0f0f0;">Pulse 2</div>
<div style="left:153px;top:363px;width:110.5px;height:2.7px;background:#47e82a;"></div>
<div style="left:158px;top:368.3px;width:20px;height:22px;background:#173b60;border-radius:7px;"></div>
<div style="left:165px;top:380px;width:6px;height:2px;background:#e8e8e8;"></div>
<div style="left:188px;top:368.3px;width:20px;height:22px;background:#10253e;border-radius:7px;"></div>
<div style="left:218px;top:368.3px;width:20px;height:22px;background:#173b60;border-radius:7px;"></div>
<svg style="position:absolute;left:188px;top:368.3px;" width="20" height="22" viewBox="0 0 20 22"><path d="M13.5 8.2 L6.5 12.6 L13.5 17" fill="none" stroke="#9aa8b8" stroke-width="1.1"/></svg>
<svg style="position:absolute;left:218px;top:368.3px;" width="20" height="22" viewBox="0 0 20 22"><path d="M6.5 8.2 L13.5 12.6 L6.5 17" fill="none" stroke="#f0f0f0" stroke-width="1.1"/></svg>
<div style="left:153px;top:400px;width:110.5px;height:26px;background:#262632;"></div>
<div style="left:162px;top:430px;width:17px;height:17.5px;background:#4cff1a;border-radius:2.5px;"></div>
<svg style="position:absolute;left:198px;top:432px;" width="21" height="14" viewBox="0 0 21 14"><path d="M1.2 7.2 C3 2.5 5.5 1.2 7.6 2.4 C9.6 3.6 10.5 6.5 11.4 8.6 C12.4 11 14 12 15.6 11.2 C17 10.5 18 8.5 18.8 6.6" fill="none" stroke="#4a4a4a" stroke-width="1.4"/></svg>
<div style="left:236px;top:436.3px;width:16px;height:4px;background:#444444;border-radius:1px;"></div>
<div class="m" style="left:274px;top:337.4px;color:#f0f0f0;">Wavetable</div>
<div style="left:264px;top:363px;width:110.5px;height:2.7px;background:#f07a32;"></div>
<div style="left:269px;top:368.3px;width:20px;height:22px;background:#173b60;border-radius:7px;"></div>
<div style="left:276px;top:380px;width:6px;height:2px;background:#e8e8e8;"></div>
<div style="left:299px;top:368.3px;width:20px;height:22px;background:#10253e;border-radius:7px;"></div>
<div style="left:329px;top:368.3px;width:20px;height:22px;background:#173b60;border-radius:7px;"></div>
<svg style="position:absolute;left:299px;top:368.3px;" width="20" height="22" viewBox="0 0 20 22"><path d="M13.5 8.2 L6.5 12.6 L13.5 17" fill="none" stroke="#9aa8b8" stroke-width="1.1"/></svg>
<svg style="position:absolute;left:329px;top:368.3px;" width="20" height="22" viewBox="0 0 20 22"><path d="M6.5 8.2 L13.5 12.6 L6.5 17" fill="none" stroke="#f0f0f0" stroke-width="1.1"/></svg>
<div style="left:264px;top:400px;width:110.5px;height:26px;background:#262632;"></div>
<div style="left:273px;top:430px;width:17px;height:17.5px;background:#4cff1a;border-radius:2.5px;"></div>
<svg style="position:absolute;left:309px;top:432px;" width="21" height="14" viewBox="0 0 21 14"><path d="M1.2 7.2 C3 2.5 5.5 1.2 7.6 2.4 C9.6 3.6 10.5 6.5 11.4 8.6 C12.4 11 14 12 15.6 11.2 C17 10.5 18 8.5 18.8 6.6" fill="none" stroke="#4a4a4a" stroke-width="1.4"/></svg>
<div style="left:347px;top:436.3px;width:16px;height:4px;background:#444444;border-radius:1px;"></div>
<div class="m" style="left:405px;top:337.4px;color:#f0f0f0;">Noise</div>
<div style="left:375px;top:363px;width:110.5px;height:2.7px;background:#cccccc;"></div>
<div style="left:380px;top:368.3px;width:20px;height:22px;background:#173b60;border-radius:7px;"></div>
<div style="left:387px;top:380px;width:6px;height:2px;background:#e8e8e8;"></div>
<div style="left:410px;top:368.3px;width:20px;height:22px;background:#10253e;border-radius:7px;"></div>
<div style="left:440px;top:368.3px;width:20px;height:22px;background:#173b60;border-radius:7px;"></div>
<svg style="position:absolute;left:410px;top:368.3px;" width="20" height="22" viewBox="0 0 20 22"><path d="M13.5 8.2 L6.5 12.6 L13.5 17" fill="none" stroke="#9aa8b8" stroke-width="1.1"/></svg>
<svg style="position:absolute;left:440px;top:368.3px;" width="20" height="22" viewBox="0 0 20 22"><path d="M6.5 8.2 L13.5 12.6 L6.5 17" fill="none" stroke="#f0f0f0" stroke-width="1.1"/></svg>
<div style="left:375px;top:400px;width:110.5px;height:26px;background:#262632;"></div>
<div style="left:384px;top:430px;width:17px;height:17.5px;background:#4cff1a;border-radius:2.5px;"></div>
<svg style="position:absolute;left:420px;top:432px;" width="21" height="14" viewBox="0 0 21 14"><path d="M1.2 7.2 C3 2.5 5.5 1.2 7.6 2.4 C9.6 3.6 10.5 6.5 11.4 8.6 C12.4 11 14 12 15.6 11.2 C17 10.5 18 8.5 18.8 6.6" fill="none" stroke="#4a4a4a" stroke-width="1.4"/></svg>
<div style="left:458px;top:436.3px;width:16px;height:4px;background:#444444;border-radius:1px;"></div>
<div style="left:41px;top:331px;width:1px;height:654px;background:#3a3a3a;"></div>
<div style="left:152px;top:331px;width:1px;height:654px;background:#3a3a3a;"></div>
<div style="left:263px;top:331px;width:1px;height:654px;background:#3a3a3a;"></div>
<div style="left:374px;top:331px;width:1px;height:654px;background:#3a3a3a;"></div>
<div style="left:485px;top:331px;width:1px;height:654px;background:#3a3a3a;"></div>
<div style="left:2px;top:451px;width:958px;height:1px;background:#4a4a4a;"></div>
<div class="clip" style="left:1px;top:452px;width:960px;height:532px;">
<div style="left:41px;top:-1px;width:443.5px;height:25px;background:#1f2b37;"></div>
<div class="m" style="left:20px;top:2.2px;color:#80ccff">0</div>
<div class="m" style="left:41px;top:2.2px;color:#dcdcdc">G-5<span style="color:#5aa8f0">06</span></div>
<svg style="position:absolute;left:41px;top:-1px" width="110" height="25"><rect x="54.1" y="15.7" width="2.3" height="2.4" fill="#8a8a8a"/><rect x="64.1" y="15.7" width="2.3" height="2.4" fill="#8a8a8a"/><rect x="74.1" y="15.7" width="2.3" height="2.4" fill="#8a8a8a"/><rect x="84.1" y="15.7" width="2.3" height="2.4" fill="#8a8a8a"/><rect x="94.1" y="15.7" width="2.3" height="2.4" fill="#8a8a8a"/><rect x="104.1" y="15.7" width="2.3" height="2.4" fill="#8a8a8a"/></svg>
<div class="m" style="left:152px;top:2.2px;color:#dcdcdc">C-4<span style="color:#5aa8f0">07</span></div>
<svg style="position:absolute;left:152px;top:-1px" width="110" height="25"><rect x="54.1" y="15.7" width="2.3" height="2.4" fill="#8a8a8a"/><rect x="64.1" y="15.7" width="2.3" height="2.4" fill="#8a8a8a"/><rect x="74.1" y="15.7" width="2.3" height="2.4" fill="#8a8a8a"/><rect x="84.1" y="15.7" width="2.3" height="2.4" fill="#8a8a8a"/><rect x="94.1" y="15.7" width="2.3" height="2.4" fill="#8a8a8a"/><rect x="104.1" y="15.7" width="2.3" height="2.4" fill="#8a8a8a"/></svg>
<div class="m" style="left:263px;top:2.2px;color:#dcdcdc">C-3<span style="color:#5aa8f0">00</span></div>
<svg style="position:absolute;left:263px;top:-1px" width="110" height="25"><rect x="54.1" y="15.7" width="2.3" height="2.4" fill="#8a8a8a"/><rect x="64.1" y="15.7" width="2.3" height="2.4" fill="#8a8a8a"/><rect x="74.1" y="15.7" width="2.3" height="2.4" fill="#8a8a8a"/><rect x="84.1" y="15.7" width="2.3" height="2.4" fill="#8a8a8a"/><rect x="94.1" y="15.7" width="2.3" height="2.4" fill="#8a8a8a"/><rect x="104.1" y="15.7" width="2.3" height="2.4" fill="#8a8a8a"/></svg>
<div class="m" style="left:374px;top:2.2px;color:#dcdcdc">C-5<span style="color:#5aa8f0">09</span></div>
<svg style="position:absolute;left:374px;top:-1px" width="110" height="25"><rect x="54.1" y="15.7" width="2.3" height="2.4" fill="#8a8a8a"/><rect x="64.1" y="15.7" width="2.3" height="2.4" fill="#8a8a8a"/><rect x="74.1" y="15.7" width="2.3" height="2.4" fill="#8a8a8a"/><rect x="84.1" y="15.7" width="2.3" height="2.4" fill="#8a8a8a"/><rect x="94.1" y="15.7" width="2.3" height="2.4" fill="#8a8a8a"/><rect x="104.1" y="15.7" width="2.3" height="2.4" fill="#8a8a8a"/></svg>
<div class="m" style="left:20px;top:27.2px;color:#80ccff">1</div>
<svg style="position:absolute;left:41px;top:24px" width="110" height="25"><rect x="4.1" y="15.7" width="2.3" height="2.4" fill="#8a8a8a"/><rect x="14.1" y="15.7" width="2.3" height="2.4" fill="#8a8a8a"/><rect x="24.1" y="15.7" width="2.3" height="2.4" fill="#8a8a8a"/><rect x="34.1" y="15.7" width="2.3" height="2.4" fill="#8a8a8a"/><rect x="44.1" y="15.7" width="2.3" height="2.4" fill="#8a8a8a"/><rect x="54.1" y="15.7" width="2.3" height="2.4" fill="#8a8a8a"/><rect x="64.1" y="15.7" width="2.3" height="2.4" fill="#8a8a8a"/><rect x="74.1" y="15.7" width="2.3" height="2.4" fill="#8a8a8a"/><rect x="84.1" y="15.7" width="2.3" height="2.4" fill="#8a8a8a"/><rect x="94.1" y="15.7" width="2.3" height="2.4" fill="#8a8a8a"/><rect x="104.1" y="15.7" width="2.3" height="2.4" fill="#8a8a8a"/></svg>
<div class="m" style="left:152px;top:27.2px;color:#dcdcdc">B-4<span style="color:#5aa8f0">08</span></div>
<svg style="position:absolute;left:152px;top:24px" width="110" height="25"><rect x="54.1" y="15.7" width="2.3" height="2.4" fill="#8a8a8a"/><rect x="64.1" y="15.7" width="2.3" height="2.4" fill="#8a8a8a"/><rect x="74.1" y="15.7" width="2.3" height="2.4" fill="#8a8a8a"/><rect x="84.1" y="15.7" width="2.3" height="2.4" fill="#8a8a8a"/><rect x="94.1" y="15.7" width="2.3" height="2.4" fill="#8a8a8a"/><rect x="104.1" y="15.7" width="2.3" height="2.4" fill="#8a8a8a"/></svg>
<svg style="position:absolute;left:263px;top:24px" width="110" height="25"><rect x="4.1" y="15.7" width="2.3" height="2.4" fill="#8a8a8a"/><rect x="14.1" y="15.7" width="2.3" height="2.4" fill="#8a8a8a"/><rect x="24.1" y="15.7" width="2.3" height="2.4" fill="#8a8a8a"/><rect x="34.1" y="15.7" width="2.3" height="2.4" fill="#8a8a8a"/><rect x="44.1" y="15.7" width="2.3" height="2.4" fill="#8a8a8a"/><rect x="54.1" y="15.7" width="2.3" height="2.4" fill="#8a8a8a"/><rect x="64.1" y="15.7" width="2.3" height="2.4" fill="#8a8a8a"/><rect x="74.1" y="15.7" width="2.3" height="2.4" fill="#8a8a8a"/><rect x="84.1" y="15.7" width="2.3" height="2.4" fill="#8a8a8a"/><rect x="94.1" y="15.7" width="2.3" height="2.4" fill="#8a8a8a"/><rect x="104.1" y="15.7" width="2.3" height="2.4" fill="#8a8a8a"/></svg>
<svg style="position:absolute;left:374px;top:24px" width="110" height="25"><rect x="4.1" y="15.7" width="2.3" height="2.4" fill="#8a8a8a"/><rect x="14.1" y="15.7" width="2.3" height="2.4" fill="#8a8a8a"/><rect x="24.1" y="15.7" width="2.3" height="2.4" fill="#8a8a8a"/><rect x="34.1" y="15.7" width="2.3" height="2.4" fill="#8a8a8a"/><rect x="44.1" y="15.7" width="2.3" height="2.4" fill="#8a8a8a"/><rect x="54.1" y="15.7" width="2.3" height="2.4" fill="#8a8a8a"/><rect x="64.1" y="15.7" width="2.3" height="2.4" fill="#8a8a8a"/><rect x="74.1" y="15.7" width="2.3" height="2.4" fill="#8a8a8a"/><rect x="84.1" y="15.7" width="2.3" height="2.4" fill="#8a8a8a"/><rect x="94.1" y="15.7" width="2.3" height="2.4" fill="#8a8a8a"/><rect x="104.1" y="15.7" width="2.3" height="2.4" fill="#8a8a8a"/></svg>
<div class="m" style="left:20px;top:52.2px;color:#80ccff">2</div>
<svg style="position:absolute;left:41px;top:49px" width="110" height="25"><rect x="4.1" y="15.7" width="2.3" height="2.4" fill="#8a8a8a"/><rect x="14.1" y="15.7" width="2.3" height="2.4" fill="#8a8a8a"/><rect x="24.1" y="15.7" width="2.3" height="2.4" fill="#8a8a8a"/><rect x="34.1" y="15.7" width="2.3" height="2.4" fill="#8a8a8a"/><rect x="44.1" y="15.7" width="2.3" height="2.4" fill="#8a8a8a"/><rect x="54.1" y="15.7" width="2.3" height="2.4" fill="#8a8a8a"/><rect x="64.1" y="15.7" width="2.3" height="2.4" fill="#8a8a8a"/><rect x="74.1" y="15.7" width="2.3" height="2.4" fill="#8a8a8a"/><rect x="84.1" y="15.7" width="2.3" height="2.4" fill="#8a8a8a"/><rect x="94.1" y="15.7" width="2.3" height="2.4" fill="#8a8a8a"/><rect x="104.1" y="15.7" width="2.3" height="2.4" fill="#8a8a8a"/></svg>
<div class="m" style="left:152px;top:52.2px;color:#dcdcdc">E-4<span style="color:#5aa8f0">07</span></div>
<svg style="position:absolute;left:152px;top:49px" width="110" height="25"><rect x="54.1" y="15.7" width="2.3" height="2.4" fill="#8a8a8a"/><rect x="64.1" y="15.7" width="2.3" height="2.4" fill="#8a8a8a"/><rect x="74.1" y="15.7" width="2.3" height="2.4" fill="#8a8a8a"/><rect x="84.1" y="15.7" width="2.3" height="2.4" fill="#8a8a8a"/><rect x="94.1" y="15.7" width="2.3" height="2.4" fill="#8a8a8a"/><rect x="104.1" y="15.7" width="2.3" height="2.4" fill="#8a8a8a"/></svg>
<div class="m" style="left:263px;top:52.2px;color:#dcdcdc">OFF</div>
<svg style="position:absolute;left:263px;top:49px" width="110" height="25"><rect x="34.1" y="15.7" width="2.3" height="2.4" fill="#8a8a8a"/><rect x="44.1" y="15.7" width="2.3" height="2.4" fill="#8a8a8a"/><rect x="54.1" y="15.7" width="2.3" height="2.4" fill="#8a8a8a"/><rect x="64.1" y="15.7" width="2.3" height="2.4" fill="#8a8a8a"/><rect x="74.1" y="15.7" width="2.3" height="2.4" fill="#8a8a8a"/><rect x="84.1" y="15.7" width="2.3" height="2.4" fill="#8a8a8a"/><rect x="94.1" y="15.7" width="2.3" height="2.4" fill="#8a8a8a"/><rect x="104.1" y="15.7" width="2.3" height="2.4" fill="#8a8a8a"/></svg>
<div class="m" style="left:374px;top:52.2px;color:#dcdcdc">C-5<span style="color:#5aa8f0">09</span></div>
<svg style="position:absolute;left:374px;top:49px" width="110" height="25"><rect x="54.1" y="15.7" width="2.3" height="2.4" fill="#8a8a8a"/><rect x="64.1" y="15.7" width="2.3" height="2.4" fill="#8a8a8a"/><rect x="74.1" y="15.7" width="2.3" height="2.4" fill="#8a8a8a"/><rect x="84.1" y="15.7" width="2.3" height="2.4" fill="#8a8a8a"/><rect x="94.1" y="15.7" width="2.3" height="2.4" fill="#8a8a8a"/><rect x="104.1" y="15.7" width="2.3" height="2.4" fill="#8a8a8a"/></svg>
<div class="m" style="left:20px;top:77.2px;color:#80ccff">3</div>
<svg style="position:absolute;left:41px;top:74px" width="110" height="25"><rect x="4.1" y="15.7" width="2.3" height="2.4" fill="#8a8a8a"/><rect x="14.1" y="15.7" width="2.3" height="2.4" fill="#8a8a8a"/><rect x="24.1" y="15.7" width="2.3" height="2.4" fill="#8a8a8a"/><rect x="34.1" y="15.7" width="2.3" height="2.4" fill="#8a8a8a"/><rect x="44.1" y="15.7" width="2.3" height="2.4" fill="#8a8a8a"/><rect x="54.1" y="15.7" width="2.3" height="2.4" fill="#8a8a8a"/><rect x="64.1" y="15.7" width="2.3" height="2.4" fill="#8a8a8a"/><rect x="74.1" y="15.7" width="2.3" height="2.4" fill="#8a8a8a"/><rect x="84.1" y="15.7" width="2.3" height="2.4" fill="#8a8a8a"/><rect x="94.1" y="15.7" width="2.3" height="2.4" fill="#8a8a8a"/><rect x="104.1" y="15.7" width="2.3" height="2.4" fill="#8a8a8a"/></svg>
<div class="m" style="left:152px;top:77.2px;color:#dcdcdc">C-4<span style="color:#5aa8f0">08</span></div>
<svg style="position:absolute;left:152px;top:74px" width="110" height="25"><rect x="54.1" y="15.7" width="2.3" height="2.4" fill="#8a8a8a"/><rect x="64.1" y="15.7" width="2.3" height="2.4" fill="#8a8a8a"/><rect x="74.1" y="15.7" width="2.3" height="2.4" fill="#8a8a8a"/><rect x="84.1" y="15.7" width="2.3" height="2.4" fill="#8a8a8a"/><rect x="94.1" y="15.7" width="2.3" height="2.4" fill="#8a8a8a"/><rect x="104.1" y="15.7" width="2.3" height="2.4" fill="#8a8a8a"/></svg>
<svg style="position:absolute;left:263px;top:74px" width="110" height="25"><rect x="4.1" y="15.7" width="2.3" height="2.4" fill="#8a8a8a"/><rect x="14.1" y="15.7" width="2.3" height="2.4" fill="#8a8a8a"/><rect x="24.1" y="15.7" width="2.3" height="2.4" fill="#8a8a8a"/><rect x="34.1" y="15.7" width="2.3" height="2.4" fill="#8a8a8a"/><rect x="44.1" y="15.7" width="2.3" height="2.4" fill="#8a8a8a"/><rect x="54.1" y="15.7" width="2.3" height="2.4" fill="#8a8a8a"/><rect x="64.1" y="15.7" width="2.3" height="2.4" fill="#8a8a8a"/><rect x="74.1" y="15.7" width="2.3" height="2.4" fill="#8a8a8a"/><rect x="84.1" y="15.7" width="2.3" height="2.4" fill="#8a8a8a"/><rect x="94.1" y="15.7" width="2.3" height="2.4" fill="#8a8a8a"/><rect x="104.1" y="15.7" width="2.3" height="2.4" fill="#8a8a8a"/></svg>
<svg style="position:absolute;left:374px;top:74px" width="110" height="25"><rect x="4.1" y="15.7" width="2.3" height="2.4" fill="#8a8a8a"/><rect x="14.1" y="15.7" width="2.3" height="2.4" fill="#8a8a8a"/><rect x="24.1" y="15.7" width="2.3" height="2.4" fill="#8a8a8a"/><rect x="34.1" y="15.7" width="2.3" height="2.4" fill="#8a8a8a"/><rect x="44.1" y="15.7" width="2.3" height="2.4" fill="#8a8a8a"/><rect x="54.1" y="15.7" width="2.3" height="2.4" fill="#8a8a8a"/><rect x="64.1" y="15.7" width="2.3" height="2.4" fill="#8a8a8a"/><rect x="74.1" y="15.7" width="2.3" height="2.4" fill="#8a8a8a"/><rect x="84.1" y="15.7" width="2.3" height="2.4" fill="#8a8a8a"/><rect x="94.1" y="15.7" width="2.3" height="2.4" fill="#8a8a8a"/><rect x="104.1" y="15.7" width="2.3" height="2.4" fill="#8a8a8a"/></svg>
<div style="left:41px;top:99px;width:443.5px;height:25px;background:#232323;"></div>
<div class="m" style="left:20px;top:102.2px;color:#80ccff">4</div>
<svg style="position:absolute;left:41px;top:99px" width="110" height="25"><rect x="4.1" y="15.7" width="2.3" height="2.4" fill="#8a8a8a"/><rect x="14.1" y="15.7" width="2.3" height="2.4" fill="#8a8a8a"/><rect x="24.1" y="15.7" width="2.3" height="2.4" fill="#8a8a8a"/><rect x="34.1" y="15.7" width="2.3" height="2.4" fill="#8a8a8a"/><rect x="44.1" y="15.7" width="2.3" height="2.4" fill="#8a8a8a"/><rect x="54.1" y="15.7" width="2.3" height="2.4" fill="#8a8a8a"/><rect x="64.1" y="15.7" width="2.3" height="2.4" fill="#8a8a8a"/><rect x="74.1" y="15.7" width="2.3" height="2.4" fill="#8a8a8a"/><rect x="84.1" y="15.7" width="2.3" height="2.4" fill="#8a8a8a"/><rect x="94.1" y="15.7" width="2.3" height="2.4" fill="#8a8a8a"/><rect x="104.1" y="15.7" width="2.3" height="2.4" fill="#8a8a8a"/></svg>
<div class="m" style="left:152px;top:102.2px;color:#dcdcdc">G-4<span style="color:#5aa8f0">07</span></div>
<svg style="position:absolute;left:152px;top:99px" width="110" height="25"><rect x="54.1" y="15.7" width="2.3" height="2.4" fill="#8a8a8a"/><rect x="64.1" y="15.7" width="2.3" height="2.4" fill="#8a8a8a"/><rect x="74.1" y="15.7" width="2.3" height="2.4" fill="#8a8a8a"/><rect x="84.1" y="15.7" width="2.3" height="2.4" fill="#8a8a8a"/><rect x="94.1" y="15.7" width="2.3" height="2.4" fill="#8a8a8a"/><rect x="104.1" y="15.7" width="2.3" height="2.4" fill="#8a8a8a"/></svg>
<div class="m" style="left:263px;top:102.2px;color:#dcdcdc">C-4<span style="color:#5aa8f0">00</span></div>
<svg style="position:absolute;left:263px;top:99px" width="110" height="25"><rect x="54.1" y="15.7" width="2.3" height="2.4" fill="#8a8a8a"/><rect x="64.1" y="15.7" width="2.3" height="2.4" fill="#8a8a8a"/><rect x="74.1" y="15.7" width="2.3" height="2.4" fill="#8a8a8a"/><rect x="84.1" y="15.7" width="2.3" height="2.4" fill="#8a8a8a"/><rect x="94.1" y="15.7" width="2.3" height="2.4" fill="#8a8a8a"/><rect x="104.1" y="15.7" width="2.3" height="2.4" fill="#8a8a8a"/></svg>
<div class="m" style="left:374px;top:102.2px;color:#dcdcdc">C-5<span style="color:#5aa8f0">09</span></div>
<svg style="position:absolute;left:374px;top:99px" width="110" height="25"><rect x="54.1" y="15.7" width="2.3" height="2.4" fill="#8a8a8a"/><rect x="64.1" y="15.7" width="2.3" height="2.4" fill="#8a8a8a"/><rect x="74.1" y="15.7" width="2.3" height="2.4" fill="#8a8a8a"/><rect x="84.1" y="15.7" width="2.3" height="2.4" fill="#8a8a8a"/><rect x="94.1" y="15.7" width="2.3" height="2.4" fill="#8a8a8a"/><rect x="104.1" y="15.7" width="2.3" height="2.4" fill="#8a8a8a"/></svg>
<div class="m" style="left:20px;top:127.2px;color:#80ccff">5</div>
<svg style="position:absolute;left:41px;top:124px" width="110" height="25"><rect x="4.1" y="15.7" width="2.3" height="2.4" fill="#8a8a8a"/><rect x="14.1" y="15.7" width="2.3" height="2.4" fill="#8a8a8a"/><rect x="24.1" y="15.7" width="2.3" height="2.4" fill="#8a8a8a"/><rect x="34.1" y="15.7" width="2.3" height="2.4" fill="#8a8a8a"/><rect x="44.1" y="15.7" width="2.3" height="2.4" fill="#8a8a8a"/><rect x="54.1" y="15.7" width="2.3" height="2.4" fill="#8a8a8a"/><rect x="64.1" y="15.7" width="2.3" height="2.4" fill="#8a8a8a"/><rect x="74.1" y="15.7" width="2.3" height="2.4" fill="#8a8a8a"/><rect x="84.1" y="15.7" width="2.3" height="2.4" fill="#8a8a8a"/><rect x="94.1" y="15.7" width="2.3" height="2.4" fill="#8a8a8a"/><rect x="104.1" y="15.7" width="2.3" height="2.4" fill="#8a8a8a"/></svg>
<div class="m" style="left:152px;top:127.2px;color:#dcdcdc">E-4<span style="color:#5aa8f0">08</span></div>
<svg style="position:absolute;left:152px;top:124px" width="110" height="25"><rect x="54.1" y="15.7" width="2.3" height="2.4" fill="#8a8a8a"/><rect x="64.1" y="15.7" width="2.3" height="2.4" fill="#8a8a8a"/><rect x="74.1" y="15.7" width="2.3" height="2.4" fill="#8a8a8a"/><rect x="84.1" y="15.7" width="2.3" height="2.4" fill="#8a8a8a"/><rect x="94.1" y="15.7" width="2.3" height="2.4" fill="#8a8a8a"/><rect x="104.1" y="15.7" width="2.3" height="2.4" fill="#8a8a8a"/></svg>
<svg style="position:absolute;left:263px;top:124px" width="110" height="25"><rect x="4.1" y="15.7" width="2.3" height="2.4" fill="#8a8a8a"/><rect x="14.1" y="15.7" width="2.3" height="2.4" fill="#8a8a8a"/><rect x="24.1" y="15.7" width="2.3" height="2.4" fill="#8a8a8a"/><rect x="34.1" y="15.7" width="2.3" height="2.4" fill="#8a8a8a"/><rect x="44.1" y="15.7" width="2.3" height="2.4" fill="#8a8a8a"/><rect x="54.1" y="15.7" width="2.3" height="2.4" fill="#8a8a8a"/><rect x="64.1" y="15.7" width="2.3" height="2.4" fill="#8a8a8a"/><rect x="74.1" y="15.7" width="2.3" height="2.4" fill="#8a8a8a"/><rect x="84.1" y="15.7" width="2.3" height="2.4" fill="#8a8a8a"/><rect x="94.1" y="15.7" width="2.3" height="2.4" fill="#8a8a8a"/><rect x="104.1" y="15.7" width="2.3" height="2.4" fill="#8a8a8a"/></svg>
<svg style="position:absolute;left:374px;top:124px" width="110" height="25"><rect x="4.1" y="15.7" width="2.3" height="2.4" fill="#8a8a8a"/><rect x="14.1" y="15.7" width="2.3" height="2.4" fill="#8a8a8a"/><rect x="24.1" y="15.7" width="2.3" height="2.4" fill="#8a8a8a"/><rect x="34.1" y="15.7" width="2.3" height="2.4" fill="#8a8a8a"/><rect x="44.1" y="15.7" width="2.3" height="2.4" fill="#8a8a8a"/><rect x="54.1" y="15.7" width="2.3" height="2.4" fill="#8a8a8a"/><rect x="64.1" y="15.7" width="2.3" height="2.4" fill="#8a8a8a"/><rect x="74.1" y="15.7" width="2.3" height="2.4" fill="#8a8a8a"/><rect x="84.1" y="15.7" width="2.3" height="2.4" fill="#8a8a8a"/><rect x="94.1" y="15.7" width="2.3" height="2.4" fill="#8a8a8a"/><rect x="104.1" y="15.7" width="2.3" height="2.4" fill="#8a8a8a"/></svg>
<div class="m" style="left:20px;top:152.2px;color:#80ccff">6</div>
<svg style="position:absolute;left:41px;top:149px" width="110" height="25"><rect x="4.1" y="15.7" width="2.3" height="2.4" fill="#8a8a8a"/><rect x="14.1" y="15.7" width="2.3" height="2.4" fill="#8a8a8a"/><rect x="24.1" y="15.7" width="2.3" height="2.4" fill="#8a8a8a"/><rect x="34.1" y="15.7" width="2.3" height="2.4" fill="#8a8a8a"/><rect x="44.1" y="15.7" width="2.3" height="2.4" fill="#8a8a8a"/><rect x="54.1" y="15.7" width="2.3" height="2.4" fill="#8a8a8a"/><rect x="64.1" y="15.7" width="2.3" height="2.4" fill="#8a8a8a"/><rect x="74.1" y="15.7" width="2.3" height="2.4" fill="#8a8a8a"/><rect x="84.1" y="15.7" width="2.3" height="2.4" fill="#8a8a8a"/><rect x="94.1" y="15.7" width="2.3" height="2.4" fill="#8a8a8a"/><rect x="104.1" y="15.7" width="2.3" height="2.4" fill="#8a8a8a"/></svg>
<div class="m" style="left:152px;top:152.2px;color:#dcdcdc">B-4<span style="color:#5aa8f0">07</span></div>
<svg style="position:absolute;left:152px;top:149px" width="110" height="25"><rect x="54.1" y="15.7" width="2.3" height="2.4" fill="#8a8a8a"/><rect x="64.1" y="15.7" width="2.3" height="2.4" fill="#8a8a8a"/><rect x="74.1" y="15.7" width="2.3" height="2.4" fill="#8a8a8a"/><rect x="84.1" y="15.7" width="2.3" height="2.4" fill="#8a8a8a"/><rect x="94.1" y="15.7" width="2.3" height="2.4" fill="#8a8a8a"/><rect x="104.1" y="15.7" width="2.3" height="2.4" fill="#8a8a8a"/></svg>
<div class="m" style="left:263px;top:152.2px;color:#dcdcdc">C-3<span style="color:#5aa8f0">00</span></div>
<svg style="position:absolute;left:263px;top:149px" width="110" height="25"><rect x="54.1" y="15.7" width="2.3" height="2.4" fill="#8a8a8a"/><rect x="64.1" y="15.7" width="2.3" height="2.4" fill="#8a8a8a"/><rect x="74.1" y="15.7" width="2.3" height="2.4" fill="#8a8a8a"/><rect x="84.1" y="15.7" width="2.3" height="2.4" fill="#8a8a8a"/><rect x="94.1" y="15.7" width="2.3" height="2.4" fill="#8a8a8a"/><rect x="104.1" y="15.7" width="2.3" height="2.4" fill="#8a8a8a"/></svg>
<div class="m" style="left:374px;top:152.2px;color:#dcdcdc">C-4<span style="color:#5aa8f0">09</span></div>
<svg style="position:absolute;left:374px;top:149px" width="110" height="25"><rect x="54.1" y="15.7" width="2.3" height="2.4" fill="#8a8a8a"/><rect x="64.1" y="15.7" width="2.3" height="2.4" fill="#8a8a8a"/><rect x="74.1" y="15.7" width="2.3" height="2.4" fill="#8a8a8a"/><rect x="84.1" y="15.7" width="2.3" height="2.4" fill="#8a8a8a"/><rect x="94.1" y="15.7" width="2.3" height="2.4" fill="#8a8a8a"/><rect x="104.1" y="15.7" width="2.3" height="2.4" fill="#8a8a8a"/></svg>
<div class="m" style="left:20px;top:177.2px;color:#80ccff">7</div>
<svg style="position:absolute;left:41px;top:174px" width="110" height="25"><rect x="4.1" y="15.7" width="2.3" height="2.4" fill="#8a8a8a"/><rect x="14.1" y="15.7" width="2.3" height="2.4" fill="#8a8a8a"/><rect x="24.1" y="15.7" width="2.3" height="2.4" fill="#8a8a8a"/><rect x="34.1" y="15.7" width="2.3" height="2.4" fill="#8a8a8a"/><rect x="44.1" y="15.7" width="2.3" height="2.4" fill="#8a8a8a"/><rect x="54.1" y="15.7" width="2.3" height="2.4" fill="#8a8a8a"/><rect x="64.1" y="15.7" width="2.3" height="2.4" fill="#8a8a8a"/><rect x="74.1" y="15.7" width="2.3" height="2.4" fill="#8a8a8a"/><rect x="84.1" y="15.7" width="2.3" height="2.4" fill="#8a8a8a"/><rect x="94.1" y="15.7" width="2.3" height="2.4" fill="#8a8a8a"/><rect x="104.1" y="15.7" width="2.3" height="2.4" fill="#8a8a8a"/></svg>
<div class="m" style="left:152px;top:177.2px;color:#dcdcdc">G-4<span style="color:#5aa8f0">08</span></div>
<svg style="position:absolute;left:152px;top:174px" width="110" height="25"><rect x="54.1" y="15.7" width="2.3" height="2.4" fill="#8a8a8a"/><rect x="64.1" y="15.7" width="2.3" height="2.4" fill="#8a8a8a"/><rect x="74.1" y="15.7" width="2.3" height="2.4" fill="#8a8a8a"/><rect x="84.1" y="15.7" width="2.3" height="2.4" fill="#8a8a8a"/><rect x="94.1" y="15.7" width="2.3" height="2.4" fill="#8a8a8a"/><rect x="104.1" y="15.7" width="2.3" height="2.4" fill="#8a8a8a"/></svg>
<svg style="position:absolute;left:263px;top:174px" width="110" height="25"><rect x="4.1" y="15.7" width="2.3" height="2.4" fill="#8a8a8a"/><rect x="14.1" y="15.7" width="2.3" height="2.4" fill="#8a8a8a"/><rect x="24.1" y="15.7" width="2.3" height="2.4" fill="#8a8a8a"/><rect x="34.1" y="15.7" width="2.3" height="2.4" fill="#8a8a8a"/><rect x="44.1" y="15.7" width="2.3" height="2.4" fill="#8a8a8a"/><rect x="54.1" y="15.7" width="2.3" height="2.4" fill="#8a8a8a"/><rect x="64.1" y="15.7" width="2.3" height="2.4" fill="#8a8a8a"/><rect x="74.1" y="15.7" width="2.3" height="2.4" fill="#8a8a8a"/><rect x="84.1" y="15.7" width="2.3" height="2.4" fill="#8a8a8a"/><rect x="94.1" y="15.7" width="2.3" height="2.4" fill="#8a8a8a"/><rect x="104.1" y="15.7" width="2.3" height="2.4" fill="#8a8a8a"/></svg>
<svg style="position:absolute;left:374px;top:174px" width="110" height="25"><rect x="4.1" y="15.7" width="2.3" height="2.4" fill="#8a8a8a"/><rect x="14.1" y="15.7" width="2.3" height="2.4" fill="#8a8a8a"/><rect x="24.1" y="15.7" width="2.3" height="2.4" fill="#8a8a8a"/><rect x="34.1" y="15.7" width="2.3" height="2.4" fill="#8a8a8a"/><rect x="44.1" y="15.7" width="2.3" height="2.4" fill="#8a8a8a"/><rect x="54.1" y="15.7" width="2.3" height="2.4" fill="#8a8a8a"/><rect x="64.1" y="15.7" width="2.3" height="2.4" fill="#8a8a8a"/><rect x="74.1" y="15.7" width="2.3" height="2.4" fill="#8a8a8a"/><rect x="84.1" y="15.7" width="2.3" height="2.4" fill="#8a8a8a"/><rect x="94.1" y="15.7" width="2.3" height="2.4" fill="#8a8a8a"/><rect x="104.1" y="15.7" width="2.3" height="2.4" fill="#8a8a8a"/></svg>
<div style="left:41px;top:199px;width:443.5px;height:25px;background:#232323;"></div>
<div class="m" style="left:20px;top:202.2px;color:#80ccff">8</div>
<svg style="position:absolute;left:41px;top:199px" width="110" height="25"><rect x="4.1" y="15.7" width="2.3" height="2.4" fill="#8a8a8a"/><rect x="14.1" y="15.7" width="2.3" height="2.4" fill="#8a8a8a"/><rect x="24.1" y="15.7" width="2.3" height="2.4" fill="#8a8a8a"/><rect x="34.1" y="15.7" width="2.3" height="2.4" fill="#8a8a8a"/><rect x="44.1" y="15.7" width="2.3" height="2.4" fill="#8a8a8a"/><rect x="54.1" y="15.7" width="2.3" height="2.4" fill="#8a8a8a"/><rect x="64.1" y="15.7" width="2.3" height="2.4" fill="#8a8a8a"/><rect x="74.1" y="15.7" width="2.3" height="2.4" fill="#8a8a8a"/><rect x="84.1" y="15.7" width="2.3" height="2.4" fill="#8a8a8a"/><rect x="94.1" y="15.7" width="2.3" height="2.4" fill="#8a8a8a"/><rect x="104.1" y="15.7" width="2.3" height="2.4" fill="#8a8a8a"/></svg>
<div class="m" style="left:152px;top:202.2px;color:#dcdcdc">C-4<span style="color:#5aa8f0">07</span></div>
<svg style="position:absolute;left:152px;top:199px" width="110" height="25"><rect x="54.1" y="15.7" width="2.3" height="2.4" fill="#8a8a8a"/><rect x="64.1" y="15.7" width="2.3" height="2.4" fill="#8a8a8a"/><rect x="74.1" y="15.7" width="2.3" height="2.4" fill="#8a8a8a"/><rect x="84.1" y="15.7" width="2.3" height="2.4" fill="#8a8a8a"/><rect x="94.1" y="15.7" width="2.3" height="2.4" fill="#8a8a8a"/><rect x="104.1" y="15.7" width="2.3" height="2.4" fill="#8a8a8a"/></svg>
<div class="m" style="left:263px;top:202.2px;color:#dcdcdc">F-3<span style="color:#5aa8f0">00</span></div>
<svg style="position:absolute;left:263px;top:199px" width="110" height="25"><rect x="54.1" y="15.7" width="2.3" height="2.4" fill="#8a8a8a"/><rect x="64.1" y="15.7" width="2.3" height="2.4" fill="#8a8a8a"/><rect x="74.1" y="15.7" width="2.3" height="2.4" fill="#8a8a8a"/><rect x="84.1" y="15.7" width="2.3" height="2.4" fill="#8a8a8a"/><rect x="94.1" y="15.7" width="2.3" height="2.4" fill="#8a8a8a"/><rect x="104.1" y="15.7" width="2.3" height="2.4" fill="#8a8a8a"/></svg>
<div class="m" style="left:374px;top:202.2px;color:#dcdcdc">C-5<span style="color:#5aa8f0">09</span></div>
<svg style="position:absolute;left:374px;top:199px" width="110" height="25"><rect x="54.1" y="15.7" width="2.3" height="2.4" fill="#8a8a8a"/><rect x="64.1" y="15.7" width="2.3" height="2.4" fill="#8a8a8a"/><rect x="74.1" y="15.7" width="2.3" height="2.4" fill="#8a8a8a"/><rect x="84.1" y="15.7" width="2.3" height="2.4" fill="#8a8a8a"/><rect x="94.1" y="15.7" width="2.3" height="2.4" fill="#8a8a8a"/><rect x="104.1" y="15.7" width="2.3" height="2.4" fill="#8a8a8a"/></svg>
<div class="m" style="left:20px;top:227.2px;color:#80ccff">9</div>
<svg style="position:absolute;left:41px;top:224px" width="110" height="25"><rect x="4.1" y="15.7" width="2.3" height="2.4" fill="#8a8a8a"/><rect x="14.1" y="15.7" width="2.3" height="2.4" fill="#8a8a8a"/><rect x="24.1" y="15.7" width="2.3" height="2.4" fill="#8a8a8a"/><rect x="34.1" y="15.7" width="2.3" height="2.4" fill="#8a8a8a"/><rect x="44.1" y="15.7" width="2.3" height="2.4" fill="#8a8a8a"/><rect x="54.1" y="15.7" width="2.3" height="2.4" fill="#8a8a8a"/><rect x="64.1" y="15.7" width="2.3" height="2.4" fill="#8a8a8a"/><rect x="74.1" y="15.7" width="2.3" height="2.4" fill="#8a8a8a"/><rect x="84.1" y="15.7" width="2.3" height="2.4" fill="#8a8a8a"/><rect x="94.1" y="15.7" width="2.3" height="2.4" fill="#8a8a8a"/><rect x="104.1" y="15.7" width="2.3" height="2.4" fill="#8a8a8a"/></svg>
<div class="m" style="left:152px;top:227.2px;color:#dcdcdc">B-4<span style="color:#5aa8f0">08</span></div>
<svg style="position:absolute;left:152px;top:224px" width="110" height="25"><rect x="54.1" y="15.7" width="2.3" height="2.4" fill="#8a8a8a"/><rect x="64.1" y="15.7" width="2.3" height="2.4" fill="#8a8a8a"/><rect x="74.1" y="15.7" width="2.3" height="2.4" fill="#8a8a8a"/><rect x="84.1" y="15.7" width="2.3" height="2.4" fill="#8a8a8a"/><rect x="94.1" y="15.7" width="2.3" height="2.4" fill="#8a8a8a"/><rect x="104.1" y="15.7" width="2.3" height="2.4" fill="#8a8a8a"/></svg>
<svg style="position:absolute;left:263px;top:224px" width="110" height="25"><rect x="4.1" y="15.7" width="2.3" height="2.4" fill="#8a8a8a"/><rect x="14.1" y="15.7" width="2.3" height="2.4" fill="#8a8a8a"/><rect x="24.1" y="15.7" width="2.3" height="2.4" fill="#8a8a8a"/><rect x="34.1" y="15.7" width="2.3" height="2.4" fill="#8a8a8a"/><rect x="44.1" y="15.7" width="2.3" height="2.4" fill="#8a8a8a"/><rect x="54.1" y="15.7" width="2.3" height="2.4" fill="#8a8a8a"/><rect x="64.1" y="15.7" width="2.3" height="2.4" fill="#8a8a8a"/><rect x="74.1" y="15.7" width="2.3" height="2.4" fill="#8a8a8a"/><rect x="84.1" y="15.7" width="2.3" height="2.4" fill="#8a8a8a"/><rect x="94.1" y="15.7" width="2.3" height="2.4" fill="#8a8a8a"/><rect x="104.1" y="15.7" width="2.3" height="2.4" fill="#8a8a8a"/></svg>
<svg style="position:absolute;left:374px;top:224px" width="110" height="25"><rect x="4.1" y="15.7" width="2.3" height="2.4" fill="#8a8a8a"/><rect x="14.1" y="15.7" width="2.3" height="2.4" fill="#8a8a8a"/><rect x="24.1" y="15.7" width="2.3" height="2.4" fill="#8a8a8a"/><rect x="34.1" y="15.7" width="2.3" height="2.4" fill="#8a8a8a"/><rect x="44.1" y="15.7" width="2.3" height="2.4" fill="#8a8a8a"/><rect x="54.1" y="15.7" width="2.3" height="2.4" fill="#8a8a8a"/><rect x="64.1" y="15.7" width="2.3" height="2.4" fill="#8a8a8a"/><rect x="74.1" y="15.7" width="2.3" height="2.4" fill="#8a8a8a"/><rect x="84.1" y="15.7" width="2.3" height="2.4" fill="#8a8a8a"/><rect x="94.1" y="15.7" width="2.3" height="2.4" fill="#8a8a8a"/><rect x="104.1" y="15.7" width="2.3" height="2.4" fill="#8a8a8a"/></svg>
<div class="m" style="left:10px;top:252.2px;color:#80ccff">10</div>
<svg style="position:absolute;left:41px;top:249px" width="110" height="25"><rect x="4.1" y="15.7" width="2.3" height="2.4" fill="#8a8a8a"/><rect x="14.1" y="15.7" width="2.3" height="2.4" fill="#8a8a8a"/><rect x="24.1" y="15.7" width="2.3" height="2.4" fill="#8a8a8a"/><rect x="34.1" y="15.7" width="2.3" height="2.4" fill="#8a8a8a"/><rect x="44.1" y="15.7" width="2.3" height="2.4" fill="#8a8a8a"/><rect x="54.1" y="15.7" width="2.3" height="2.4" fill="#8a8a8a"/><rect x="64.1" y="15.7" width="2.3" height="2.4" fill="#8a8a8a"/><rect x="74.1" y="15.7" width="2.3" height="2.4" fill="#8a8a8a"/><rect x="84.1" y="15.7" width="2.3" height="2.4" fill="#8a8a8a"/><rect x="94.1" y="15.7" width="2.3" height="2.4" fill="#8a8a8a"/><rect x="104.1" y="15.7" width="2.3" height="2.4" fill="#8a8a8a"/></svg>
<div class="m" style="left:152px;top:252.2px;color:#dcdcdc">E-4<span style="color:#5aa8f0">07</span></div>
<svg style="position:absolute;left:152px;top:249px" width="110" height="25"><rect x="54.1" y="15.7" width="2.3" height="2.4" fill="#8a8a8a"/><rect x="64.1" y="15.7" width="2.3" height="2.4" fill="#8a8a8a"/><rect x="74.1" y="15.7" width="2.3" height="2.4" fill="#8a8a8a"/><rect x="84.1" y="15.7" width="2.3" height="2.4" fill="#8a8a8a"/><rect x="94.1" y="15.7" width="2.3" height="2.4" fill="#8a8a8a"/><rect x="104.1" y="15.7" width="2.3" height="2.4" fill="#8a8a8a"/></svg>
<div class="m" style="left:263px;top:252.2px;color:#dcdcdc">C-4<span style="color:#5aa8f0">00</span></div>
<svg style="position:absolute;left:263px;top:249px" width="110" height="25"><rect x="54.1" y="15.7" width="2.3" height="2.4" fill="#8a8a8a"/><rect x="64.1" y="15.7" width="2.3" height="2.4" fill="#8a8a8a"/><rect x="74.1" y="15.7" width="2.3" height="2.4" fill="#8a8a8a"/><rect x="84.1" y="15.7" width="2.3" height="2.4" fill="#8a8a8a"/><rect x="94.1" y="15.7" width="2.3" height="2.4" fill="#8a8a8a"/><rect x="104.1" y="15.7" width="2.3" height="2.4" fill="#8a8a8a"/></svg>
<div class="m" style="left:374px;top:252.2px;color:#dcdcdc">C-5<span style="color:#5aa8f0">09</span></div>
<svg style="position:absolute;left:374px;top:249px" width="110" height="25"><rect x="54.1" y="15.7" width="2.3" height="2.4" fill="#8a8a8a"/><rect x="64.1" y="15.7" width="2.3" height="2.4" fill="#8a8a8a"/><rect x="74.1" y="15.7" width="2.3" height="2.4" fill="#8a8a8a"/><rect x="84.1" y="15.7" width="2.3" height="2.4" fill="#8a8a8a"/><rect x="94.1" y="15.7" width="2.3" height="2.4" fill="#8a8a8a"/><rect x="104.1" y="15.7" width="2.3" height="2.4" fill="#8a8a8a"/></svg>
<div class="m" style="left:10px;top:277.2px;color:#80ccff">11</div>
<svg style="position:absolute;left:41px;top:274px" width="110" height="25"><rect x="4.1" y="15.7" width="2.3" height="2.4" fill="#8a8a8a"/><rect x="14.1" y="15.7" width="2.3" height="2.4" fill="#8a8a8a"/><rect x="24.1" y="15.7" width="2.3" height="2.4" fill="#8a8a8a"/><rect x="34.1" y="15.7" width="2.3" height="2.4" fill="#8a8a8a"/><rect x="44.1" y="15.7" width="2.3" height="2.4" fill="#8a8a8a"/><rect x="54.1" y="15.7" width="2.3" height="2.4" fill="#8a8a8a"/><rect x="64.1" y="15.7" width="2.3" height="2.4" fill="#8a8a8a"/><rect x="74.1" y="15.7" width="2.3" height="2.4" fill="#8a8a8a"/><rect x="84.1" y="15.7" width="2.3" height="2.4" fill="#8a8a8a"/><rect x="94.1" y="15.7" width="2.3" height="2.4" fill="#8a8a8a"/><rect x="104.1" y="15.7" width="2.3" height="2.4" fill="#8a8a8a"/></svg>
<div class="m" style="left:152px;top:277.2px;color:#dcdcdc">C-4<span style="color:#5aa8f0">08</span></div>
<svg style="position:absolute;left:152px;top:274px" width="110" height="25"><rect x="54.1" y="15.7" width="2.3" height="2.4" fill="#8a8a8a"/><rect x="64.1" y="15.7" width="2.3" height="2.4" fill="#8a8a8a"/><rect x="74.1" y="15.7" width="2.3" height="2.4" fill="#8a8a8a"/><rect x="84.1" y="15.7" width="2.3" height="2.4" fill="#8a8a8a"/><rect x="94.1" y="15.7" width="2.3" height="2.4" fill="#8a8a8a"/><rect x="104.1" y="15.7" width="2.3" height="2.4" fill="#8a8a8a"/></svg>
<svg style="position:absolute;left:263px;top:274px" width="110" height="25"><rect x="4.1" y="15.7" width="2.3" height="2.4" fill="#8a8a8a"/><rect x="14.1" y="15.7" width="2.3" height="2.4" fill="#8a8a8a"/><rect x="24.1" y="15.7" width="2.3" height="2.4" fill="#8a8a8a"/><rect x="34.1" y="15.7" width="2.3" height="2.4" fill="#8a8a8a"/><rect x="44.1" y="15.7" width="2.3" height="2.4" fill="#8a8a8a"/><rect x="54.1" y="15.7" width="2.3" height="2.4" fill="#8a8a8a"/><rect x="64.1" y="15.7" width="2.3" height="2.4" fill="#8a8a8a"/><rect x="74.1" y="15.7" width="2.3" height="2.4" fill="#8a8a8a"/><rect x="84.1" y="15.7" width="2.3" height="2.4" fill="#8a8a8a"/><rect x="94.1" y="15.7" width="2.3" height="2.4" fill="#8a8a8a"/><rect x="104.1" y="15.7" width="2.3" height="2.4" fill="#8a8a8a"/></svg>
<div class="m" style="left:374px;top:277.2px;color:#dcdcdc">C-5<span style="color:#5aa8f0">09</span></div>
<svg style="position:absolute;left:374px;top:274px" width="110" height="25"><rect x="54.1" y="15.7" width="2.3" height="2.4" fill="#8a8a8a"/><rect x="64.1" y="15.7" width="2.3" height="2.4" fill="#8a8a8a"/><rect x="74.1" y="15.7" width="2.3" height="2.4" fill="#8a8a8a"/><rect x="84.1" y="15.7" width="2.3" height="2.4" fill="#8a8a8a"/><rect x="94.1" y="15.7" width="2.3" height="2.4" fill="#8a8a8a"/><rect x="104.1" y="15.7" width="2.3" height="2.4" fill="#8a8a8a"/></svg>
<div style="left:41px;top:299px;width:443.5px;height:25px;background:#232323;"></div>
<div style="left:41px;top:299px;width:30px;height:25px;background:#2c2c3a;"></div>
<div class="m" style="left:10px;top:302.2px;color:#80ccff">12</div>
<div class="m" style="left:41px;top:302.2px;color:#dcdcdc">F-5<span style="color:#5aa8f0">06</span></div>
<svg style="position:absolute;left:41px;top:299px" width="110" height="25"><rect x="54.1" y="15.7" width="2.3" height="2.4" fill="#8a8a8a"/><rect x="64.1" y="15.7" width="2.3" height="2.4" fill="#8a8a8a"/><rect x="74.1" y="15.7" width="2.3" height="2.4" fill="#8a8a8a"/><rect x="84.1" y="15.7" width="2.3" height="2.4" fill="#8a8a8a"/><rect x="94.1" y="15.7" width="2.3" height="2.4" fill="#8a8a8a"/><rect x="104.1" y="15.7" width="2.3" height="2.4" fill="#8a8a8a"/></svg>
<div class="m" style="left:152px;top:302.2px;color:#dcdcdc">G-4<span style="color:#5aa8f0">07</span></div>
<svg style="position:absolute;left:152px;top:299px" width="110" height="25"><rect x="54.1" y="15.7" width="2.3" height="2.4" fill="#8a8a8a"/><rect x="64.1" y="15.7" width="2.3" height="2.4" fill="#8a8a8a"/><rect x="74.1" y="15.7" width="2.3" height="2.4" fill="#8a8a8a"/><rect x="84.1" y="15.7" width="2.3" height="2.4" fill="#8a8a8a"/><rect x="94.1" y="15.7" width="2.3" height="2.4" fill="#8a8a8a"/><rect x="104.1" y="15.7" width="2.3" height="2.4" fill="#8a8a8a"/></svg>
<div class="m" style="left:263px;top:302.2px;color:#dcdcdc">C-3<span style="color:#5aa8f0">00</span></div>
<svg style="position:absolute;left:263px;top:299px" width="110" height="25"><rect x="54.1" y="15.7" width="2.3" height="2.4" fill="#8a8a8a"/><rect x="64.1" y="15.7" width="2.3" height="2.4" fill="#8a8a8a"/><rect x="74.1" y="15.7" width="2.3" height="2.4" fill="#8a8a8a"/><rect x="84.1" y="15.7" width="2.3" height="2.4" fill="#8a8a8a"/><rect x="94.1" y="15.7" width="2.3" height="2.4" fill="#8a8a8a"/><rect x="104.1" y="15.7" width="2.3" height="2.4" fill="#8a8a8a"/></svg>
<div class="m" style="left:374px;top:302.2px;color:#dcdcdc">C-5<span style="color:#5aa8f0">09</span></div>
<svg style="position:absolute;left:374px;top:299px" width="110" height="25"><rect x="54.1" y="15.7" width="2.3" height="2.4" fill="#8a8a8a"/><rect x="64.1" y="15.7" width="2.3" height="2.4" fill="#8a8a8a"/><rect x="74.1" y="15.7" width="2.3" height="2.4" fill="#8a8a8a"/><rect x="84.1" y="15.7" width="2.3" height="2.4" fill="#8a8a8a"/><rect x="94.1" y="15.7" width="2.3" height="2.4" fill="#8a8a8a"/><rect x="104.1" y="15.7" width="2.3" height="2.4" fill="#8a8a8a"/></svg>
<div class="m" style="left:10px;top:327.2px;color:#80ccff">13</div>
<div class="m" style="left:41px;top:327.2px;color:#dcdcdc">OFF</div>
<svg style="position:absolute;left:41px;top:324px" width="110" height="25"><rect x="34.1" y="15.7" width="2.3" height="2.4" fill="#8a8a8a"/><rect x="44.1" y="15.7" width="2.3" height="2.4" fill="#8a8a8a"/><rect x="54.1" y="15.7" width="2.3" height="2.4" fill="#8a8a8a"/><rect x="64.1" y="15.7" width="2.3" height="2.4" fill="#8a8a8a"/><rect x="74.1" y="15.7" width="2.3" height="2.4" fill="#8a8a8a"/><rect x="84.1" y="15.7" width="2.3" height="2.4" fill="#8a8a8a"/><rect x="94.1" y="15.7" width="2.3" height="2.4" fill="#8a8a8a"/><rect x="104.1" y="15.7" width="2.3" height="2.4" fill="#8a8a8a"/></svg>
<div class="m" style="left:152px;top:327.2px;color:#dcdcdc">E-4<span style="color:#5aa8f0">08</span></div>
<svg style="position:absolute;left:152px;top:324px" width="110" height="25"><rect x="54.1" y="15.7" width="2.3" height="2.4" fill="#8a8a8a"/><rect x="64.1" y="15.7" width="2.3" height="2.4" fill="#8a8a8a"/><rect x="74.1" y="15.7" width="2.3" height="2.4" fill="#8a8a8a"/><rect x="84.1" y="15.7" width="2.3" height="2.4" fill="#8a8a8a"/><rect x="94.1" y="15.7" width="2.3" height="2.4" fill="#8a8a8a"/><rect x="104.1" y="15.7" width="2.3" height="2.4" fill="#8a8a8a"/></svg>
<svg style="position:absolute;left:263px;top:324px" width="110" height="25"><rect x="4.1" y="15.7" width="2.3" height="2.4" fill="#8a8a8a"/><rect x="14.1" y="15.7" width="2.3" height="2.4" fill="#8a8a8a"/><rect x="24.1" y="15.7" width="2.3" height="2.4" fill="#8a8a8a"/><rect x="34.1" y="15.7" width="2.3" height="2.4" fill="#8a8a8a"/><rect x="44.1" y="15.7" width="2.3" height="2.4" fill="#8a8a8a"/><rect x="54.1" y="15.7" width="2.3" height="2.4" fill="#8a8a8a"/><rect x="64.1" y="15.7" width="2.3" height="2.4" fill="#8a8a8a"/><rect x="74.1" y="15.7" width="2.3" height="2.4" fill="#8a8a8a"/><rect x="84.1" y="15.7" width="2.3" height="2.4" fill="#8a8a8a"/><rect x="94.1" y="15.7" width="2.3" height="2.4" fill="#8a8a8a"/><rect x="104.1" y="15.7" width="2.3" height="2.4" fill="#8a8a8a"/></svg>
<svg style="position:absolute;left:374px;top:324px" width="110" height="25"><rect x="4.1" y="15.7" width="2.3" height="2.4" fill="#8a8a8a"/><rect x="14.1" y="15.7" width="2.3" height="2.4" fill="#8a8a8a"/><rect x="24.1" y="15.7" width="2.3" height="2.4" fill="#8a8a8a"/><rect x="34.1" y="15.7" width="2.3" height="2.4" fill="#8a8a8a"/><rect x="44.1" y="15.7" width="2.3" height="2.4" fill="#8a8a8a"/><rect x="54.1" y="15.7" width="2.3" height="2.4" fill="#8a8a8a"/><rect x="64.1" y="15.7" width="2.3" height="2.4" fill="#8a8a8a"/><rect x="74.1" y="15.7" width="2.3" height="2.4" fill="#8a8a8a"/><rect x="84.1" y="15.7" width="2.3" height="2.4" fill="#8a8a8a"/><rect x="94.1" y="15.7" width="2.3" height="2.4" fill="#8a8a8a"/><rect x="104.1" y="15.7" width="2.3" height="2.4" fill="#8a8a8a"/></svg>
<div class="m" style="left:10px;top:352.2px;color:#80ccff">14</div>
<div class="m" style="left:41px;top:352.2px;color:#dcdcdc">E-5<span style="color:#5aa8f0">06</span></div>
<svg style="position:absolute;left:41px;top:349px" width="110" height="25"><rect x="54.1" y="15.7" width="2.3" height="2.4" fill="#8a8a8a"/><rect x="64.1" y="15.7" width="2.3" height="2.4" fill="#8a8a8a"/><rect x="74.1" y="15.7" width="2.3" height="2.4" fill="#8a8a8a"/><rect x="84.1" y="15.7" width="2.3" height="2.4" fill="#8a8a8a"/><rect x="94.1" y="15.7" width="2.3" height="2.4" fill="#8a8a8a"/><rect x="104.1" y="15.7" width="2.3" height="2.4" fill="#8a8a8a"/></svg>
<div class="m" style="left:152px;top:352.2px;color:#dcdcdc">B-4<span style="color:#5aa8f0">07</span></div>
<svg style="position:absolute;left:152px;top:349px" width="110" height="25"><rect x="54.1" y="15.7" width="2.3" height="2.4" fill="#8a8a8a"/><rect x="64.1" y="15.7" width="2.3" height="2.4" fill="#8a8a8a"/><rect x="74.1" y="15.7" width="2.3" height="2.4" fill="#8a8a8a"/><rect x="84.1" y="15.7" width="2.3" height="2.4" fill="#8a8a8a"/><rect x="94.1" y="15.7" width="2.3" height="2.4" fill="#8a8a8a"/><rect x="104.1" y="15.7" width="2.3" height="2.4" fill="#8a8a8a"/></svg>
<div class="m" style="left:263px;top:352.2px;color:#dcdcdc">F-3<span style="color:#5aa8f0">00</span></div>
<svg style="position:absolute;left:263px;top:349px" width="110" height="25"><rect x="54.1" y="15.7" width="2.3" height="2.4" fill="#8a8a8a"/><rect x="64.1" y="15.7" width="2.3" height="2.4" fill="#8a8a8a"/><rect x="74.1" y="15.7" width="2.3" height="2.4" fill="#8a8a8a"/><rect x="84.1" y="15.7" width="2.3" height="2.4" fill="#8a8a8a"/><rect x="94.1" y="15.7" width="2.3" height="2.4" fill="#8a8a8a"/><rect x="104.1" y="15.7" width="2.3" height="2.4" fill="#8a8a8a"/></svg>
<div class="m" style="left:374px;top:352.2px;color:#dcdcdc">C-4<span style="color:#5aa8f0">09</span></div>
<svg style="position:absolute;left:374px;top:349px" width="110" height="25"><rect x="54.1" y="15.7" width="2.3" height="2.4" fill="#8a8a8a"/><rect x="64.1" y="15.7" width="2.3" height="2.4" fill="#8a8a8a"/><rect x="74.1" y="15.7" width="2.3" height="2.4" fill="#8a8a8a"/><rect x="84.1" y="15.7" width="2.3" height="2.4" fill="#8a8a8a"/><rect x="94.1" y="15.7" width="2.3" height="2.4" fill="#8a8a8a"/><rect x="104.1" y="15.7" width="2.3" height="2.4" fill="#8a8a8a"/></svg>
<div class="m" style="left:10px;top:377.2px;color:#80ccff">15</div>
<div class="m" style="left:41px;top:377.2px;color:#dcdcdc">OFF</div>
<svg style="position:absolute;left:41px;top:374px" width="110" height="25"><rect x="34.1" y="15.7" width="2.3" height="2.4" fill="#8a8a8a"/><rect x="44.1" y="15.7" width="2.3" height="2.4" fill="#8a8a8a"/><rect x="54.1" y="15.7" width="2.3" height="2.4" fill="#8a8a8a"/><rect x="64.1" y="15.7" width="2.3" height="2.4" fill="#8a8a8a"/><rect x="74.1" y="15.7" width="2.3" height="2.4" fill="#8a8a8a"/><rect x="84.1" y="15.7" width="2.3" height="2.4" fill="#8a8a8a"/><rect x="94.1" y="15.7" width="2.3" height="2.4" fill="#8a8a8a"/><rect x="104.1" y="15.7" width="2.3" height="2.4" fill="#8a8a8a"/></svg>
<div class="m" style="left:152px;top:377.2px;color:#dcdcdc">G-4<span style="color:#5aa8f0">08</span></div>
<svg style="position:absolute;left:152px;top:374px" width="110" height="25"><rect x="54.1" y="15.7" width="2.3" height="2.4" fill="#8a8a8a"/><rect x="64.1" y="15.7" width="2.3" height="2.4" fill="#8a8a8a"/><rect x="74.1" y="15.7" width="2.3" height="2.4" fill="#8a8a8a"/><rect x="84.1" y="15.7" width="2.3" height="2.4" fill="#8a8a8a"/><rect x="94.1" y="15.7" width="2.3" height="2.4" fill="#8a8a8a"/><rect x="104.1" y="15.7" width="2.3" height="2.4" fill="#8a8a8a"/></svg>
<svg style="position:absolute;left:263px;top:374px" width="110" height="25"><rect x="4.1" y="15.7" width="2.3" height="2.4" fill="#8a8a8a"/><rect x="14.1" y="15.7" width="2.3" height="2.4" fill="#8a8a8a"/><rect x="24.1" y="15.7" width="2.3" height="2.4" fill="#8a8a8a"/><rect x="34.1" y="15.7" width="2.3" height="2.4" fill="#8a8a8a"/><rect x="44.1" y="15.7" width="2.3" height="2.4" fill="#8a8a8a"/><rect x="54.1" y="15.7" width="2.3" height="2.4" fill="#8a8a8a"/><rect x="64.1" y="15.7" width="2.3" height="2.4" fill="#8a8a8a"/><rect x="74.1" y="15.7" width="2.3" height="2.4" fill="#8a8a8a"/><rect x="84.1" y="15.7" width="2.3" height="2.4" fill="#8a8a8a"/><rect x="94.1" y="15.7" width="2.3" height="2.4" fill="#8a8a8a"/><rect x="104.1" y="15.7" width="2.3" height="2.4" fill="#8a8a8a"/></svg>
<svg style="position:absolute;left:374px;top:374px" width="110" height="25"><rect x="4.1" y="15.7" width="2.3" height="2.4" fill="#8a8a8a"/><rect x="14.1" y="15.7" width="2.3" height="2.4" fill="#8a8a8a"/><rect x="24.1" y="15.7" width="2.3" height="2.4" fill="#8a8a8a"/><rect x="34.1" y="15.7" width="2.3" height="2.4" fill="#8a8a8a"/><rect x="44.1" y="15.7" width="2.3" height="2.4" fill="#8a8a8a"/><rect x="54.1" y="15.7" width="2.3" height="2.4" fill="#8a8a8a"/><rect x="64.1" y="15.7" width="2.3" height="2.4" fill="#8a8a8a"/><rect x="74.1" y="15.7" width="2.3" height="2.4" fill="#8a8a8a"/><rect x="84.1" y="15.7" width="2.3" height="2.4" fill="#8a8a8a"/><rect x="94.1" y="15.7" width="2.3" height="2.4" fill="#8a8a8a"/><rect x="104.1" y="15.7" width="2.3" height="2.4" fill="#8a8a8a"/></svg>
<div style="left:41px;top:399px;width:443.5px;height:25px;background:#1f2b37;"></div>
<div class="m" style="left:10px;top:402.2px;color:#80ccff">16</div>
<div class="m" style="left:41px;top:402.2px;color:#dcdcdc">F-5<span style="color:#5aa8f0">06</span></div>
<svg style="position:absolute;left:41px;top:399px" width="110" height="25"><rect x="54.1" y="15.7" width="2.3" height="2.4" fill="#8a8a8a"/><rect x="64.1" y="15.7" width="2.3" height="2.4" fill="#8a8a8a"/><rect x="74.1" y="15.7" width="2.3" height="2.4" fill="#8a8a8a"/><rect x="84.1" y="15.7" width="2.3" height="2.4" fill="#8a8a8a"/><rect x="94.1" y="15.7" width="2.3" height="2.4" fill="#8a8a8a"/><rect x="104.1" y="15.7" width="2.3" height="2.4" fill="#8a8a8a"/></svg>
<div class="m" style="left:152px;top:402.2px;color:#dcdcdc">C-4<span style="color:#5aa8f0">07</span></div>
<svg style="position:absolute;left:152px;top:399px" width="110" height="25"><rect x="54.1" y="15.7" width="2.3" height="2.4" fill="#8a8a8a"/><rect x="64.1" y="15.7" width="2.3" height="2.4" fill="#8a8a8a"/><rect x="74.1" y="15.7" width="2.3" height="2.4" fill="#8a8a8a"/><rect x="84.1" y="15.7" width="2.3" height="2.4" fill="#8a8a8a"/><rect x="94.1" y="15.7" width="2.3" height="2.4" fill="#8a8a8a"/><rect x="104.1" y="15.7" width="2.3" height="2.4" fill="#8a8a8a"/></svg>
<div class="m" style="left:263px;top:402.2px;color:#dcdcdc">OFF</div>
<svg style="position:absolute;left:263px;top:399px" width="110" height="25"><rect x="34.1" y="15.7" width="2.3" height="2.4" fill="#8a8a8a"/><rect x="44.1" y="15.7" width="2.3" height="2.4" fill="#8a8a8a"/><rect x="54.1" y="15.7" width="2.3" height="2.4" fill="#8a8a8a"/><rect x="64.1" y="15.7" width="2.3" height="2.4" fill="#8a8a8a"/><rect x="74.1" y="15.7" width="2.3" height="2.4" fill="#8a8a8a"/><rect x="84.1" y="15.7" width="2.3" height="2.4" fill="#8a8a8a"/><rect x="94.1" y="15.7" width="2.3" height="2.4" fill="#8a8a8a"/><rect x="104.1" y="15.7" width="2.3" height="2.4" fill="#8a8a8a"/></svg>
<div class="m" style="left:374px;top:402.2px;color:#dcdcdc">C-5<span style="color:#5aa8f0">09</span></div>
<svg style="position:absolute;left:374px;top:399px" width="110" height="25"><rect x="54.1" y="15.7" width="2.3" height="2.4" fill="#8a8a8a"/><rect x="64.1" y="15.7" width="2.3" height="2.4" fill="#8a8a8a"/><rect x="74.1" y="15.7" width="2.3" height="2.4" fill="#8a8a8a"/><rect x="84.1" y="15.7" width="2.3" height="2.4" fill="#8a8a8a"/><rect x="94.1" y="15.7" width="2.3" height="2.4" fill="#8a8a8a"/><rect x="104.1" y="15.7" width="2.3" height="2.4" fill="#8a8a8a"/></svg>
<div class="m" style="left:10px;top:427.2px;color:#80ccff">17</div>
<svg style="position:absolute;left:41px;top:424px" width="110" height="25"><rect x="4.1" y="15.7" width="2.3" height="2.4" fill="#8a8a8a"/><rect x="14.1" y="15.7" width="2.3" height="2.4" fill="#8a8a8a"/><rect x="24.1" y="15.7" width="2.3" height="2.4" fill="#8a8a8a"/><rect x="34.1" y="15.7" width="2.3" height="2.4" fill="#8a8a8a"/><rect x="44.1" y="15.7" width="2.3" height="2.4" fill="#8a8a8a"/><rect x="54.1" y="15.7" width="2.3" height="2.4" fill="#8a8a8a"/><rect x="64.1" y="15.7" width="2.3" height="2.4" fill="#8a8a8a"/><rect x="74.1" y="15.7" width="2.3" height="2.4" fill="#8a8a8a"/><rect x="84.1" y="15.7" width="2.3" height="2.4" fill="#8a8a8a"/><rect x="94.1" y="15.7" width="2.3" height="2.4" fill="#8a8a8a"/><rect x="104.1" y="15.7" width="2.3" height="2.4" fill="#8a8a8a"/></svg>
<div class="m" style="left:152px;top:427.2px;color:#dcdcdc">B-4<span style="color:#5aa8f0">08</span></div>
<svg style="position:absolute;left:152px;top:424px" width="110" height="25"><rect x="54.1" y="15.7" width="2.3" height="2.4" fill="#8a8a8a"/><rect x="64.1" y="15.7" width="2.3" height="2.4" fill="#8a8a8a"/><rect x="74.1" y="15.7" width="2.3" height="2.4" fill="#8a8a8a"/><rect x="84.1" y="15.7" width="2.3" height="2.4" fill="#8a8a8a"/><rect x="94.1" y="15.7" width="2.3" height="2.4" fill="#8a8a8a"/><rect x="104.1" y="15.7" width="2.3" height="2.4" fill="#8a8a8a"/></svg>
<svg style="position:absolute;left:263px;top:424px" width="110" height="25"><rect x="4.1" y="15.7" width="2.3" height="2.4" fill="#8a8a8a"/><rect x="14.1" y="15.7" width="2.3" height="2.4" fill="#8a8a8a"/><rect x="24.1" y="15.7" width="2.3" height="2.4" fill="#8a8a8a"/><rect x="34.1" y="15.7" width="2.3" height="2.4" fill="#8a8a8a"/><rect x="44.1" y="15.7" width="2.3" height="2.4" fill="#8a8a8a"/><rect x="54.1" y="15.7" width="2.3" height="2.4" fill="#8a8a8a"/><rect x="64.1" y="15.7" width="2.3" height="2.4" fill="#8a8a8a"/><rect x="74.1" y="15.7" width="2.3" height="2.4" fill="#8a8a8a"/><rect x="84.1" y="15.7" width="2.3" height="2.4" fill="#8a8a8a"/><rect x="94.1" y="15.7" width="2.3" height="2.4" fill="#8a8a8a"/><rect x="104.1" y="15.7" width="2.3" height="2.4" fill="#8a8a8a"/></svg>
<svg style="position:absolute;left:374px;top:424px" width="110" height="25"><rect x="4.1" y="15.7" width="2.3" height="2.4" fill="#8a8a8a"/><rect x="14.1" y="15.7" width="2.3" height="2.4" fill="#8a8a8a"/><rect x="24.1" y="15.7" width="2.3" height="2.4" fill="#8a8a8a"/><rect x="34.1" y="15.7" width="2.3" height="2.4" fill="#8a8a8a"/><rect x="44.1" y="15.7" width="2.3" height="2.4" fill="#8a8a8a"/><rect x="54.1" y="15.7" width="2.3" height="2.4" fill="#8a8a8a"/><rect x="64.1" y="15.7" width="2.3" height="2.4" fill="#8a8a8a"/><rect x="74.1" y="15.7" width="2.3" height="2.4" fill="#8a8a8a"/><rect x="84.1" y="15.7" width="2.3" height="2.4" fill="#8a8a8a"/><rect x="94.1" y="15.7" width="2.3" height="2.4" fill="#8a8a8a"/><rect x="104.1" y="15.7" width="2.3" height="2.4" fill="#8a8a8a"/></svg>
<div class="m" style="left:10px;top:452.2px;color:#80ccff">18</div>
<svg style="position:absolute;left:41px;top:449px" width="110" height="25"><rect x="4.1" y="15.7" width="2.3" height="2.4" fill="#8a8a8a"/><rect x="14.1" y="15.7" width="2.3" height="2.4" fill="#8a8a8a"/><rect x="24.1" y="15.7" width="2.3" height="2.4" fill="#8a8a8a"/><rect x="34.1" y="15.7" width="2.3" height="2.4" fill="#8a8a8a"/><rect x="44.1" y="15.7" width="2.3" height="2.4" fill="#8a8a8a"/><rect x="54.1" y="15.7" width="2.3" height="2.4" fill="#8a8a8a"/><rect x="64.1" y="15.7" width="2.3" height="2.4" fill="#8a8a8a"/><rect x="74.1" y="15.7" width="2.3" height="2.4" fill="#8a8a8a"/><rect x="84.1" y="15.7" width="2.3" height="2.4" fill="#8a8a8a"/><rect x="94.1" y="15.7" width="2.3" height="2.4" fill="#8a8a8a"/><rect x="104.1" y="15.7" width="2.3" height="2.4" fill="#8a8a8a"/></svg>
<div class="m" style="left:152px;top:452.2px;color:#dcdcdc">E-4<span style="color:#5aa8f0">07</span></div>
<svg style="position:absolute;left:152px;top:449px" width="110" height="25"><rect x="54.1" y="15.7" width="2.3" height="2.4" fill="#8a8a8a"/><rect x="64.1" y="15.7" width="2.3" height="2.4" fill="#8a8a8a"/><rect x="74.1" y="15.7" width="2.3" height="2.4" fill="#8a8a8a"/><rect x="84.1" y="15.7" width="2.3" height="2.4" fill="#8a8a8a"/><rect x="94.1" y="15.7" width="2.3" height="2.4" fill="#8a8a8a"/><rect x="104.1" y="15.7" width="2.3" height="2.4" fill="#8a8a8a"/></svg>
<svg style="position:absolute;left:263px;top:449px" width="110" height="25"><rect x="4.1" y="15.7" width="2.3" height="2.4" fill="#8a8a8a"/><rect x="14.1" y="15.7" width="2.3" height="2.4" fill="#8a8a8a"/><rect x="24.1" y="15.7" width="2.3" height="2.4" fill="#8a8a8a"/><rect x="34.1" y="15.7" width="2.3" height="2.4" fill="#8a8a8a"/><rect x="44.1" y="15.7" width="2.3" height="2.4" fill="#8a8a8a"/><rect x="54.1" y="15.7" width="2.3" height="2.4" fill="#8a8a8a"/><rect x="64.1" y="15.7" width="2.3" height="2.4" fill="#8a8a8a"/><rect x="74.1" y="15.7" width="2.3" height="2.4" fill="#8a8a8a"/><rect x="84.1" y="15.7" width="2.3" height="2.4" fill="#8a8a8a"/><rect x="94.1" y="15.7" width="2.3" height="2.4" fill="#8a8a8a"/><rect x="104.1" y="15.7" width="2.3" height="2.4" fill="#8a8a8a"/></svg>
<div class="m" style="left:374px;top:452.2px;color:#dcdcdc">C-5<span style="color:#5aa8f0">09</span></div>
<svg style="position:absolute;left:374px;top:449px" width="110" height="25"><rect x="54.1" y="15.7" width="2.3" height="2.4" fill="#8a8a8a"/><rect x="64.1" y="15.7" width="2.3" height="2.4" fill="#8a8a8a"/><rect x="74.1" y="15.7" width="2.3" height="2.4" fill="#8a8a8a"/><rect x="84.1" y="15.7" width="2.3" height="2.4" fill="#8a8a8a"/><rect x="94.1" y="15.7" width="2.3" height="2.4" fill="#8a8a8a"/><rect x="104.1" y="15.7" width="2.3" height="2.4" fill="#8a8a8a"/></svg>
<div class="m" style="left:10px;top:477.2px;color:#80ccff">19</div>
<svg style="position:absolute;left:41px;top:474px" width="110" height="25"><rect x="4.1" y="15.7" width="2.3" height="2.4" fill="#8a8a8a"/><rect x="14.1" y="15.7" width="2.3" height="2.4" fill="#8a8a8a"/><rect x="24.1" y="15.7" width="2.3" height="2.4" fill="#8a8a8a"/><rect x="34.1" y="15.7" width="2.3" height="2.4" fill="#8a8a8a"/><rect x="44.1" y="15.7" width="2.3" height="2.4" fill="#8a8a8a"/><rect x="54.1" y="15.7" width="2.3" height="2.4" fill="#8a8a8a"/><rect x="64.1" y="15.7" width="2.3" height="2.4" fill="#8a8a8a"/><rect x="74.1" y="15.7" width="2.3" height="2.4" fill="#8a8a8a"/><rect x="84.1" y="15.7" width="2.3" height="2.4" fill="#8a8a8a"/><rect x="94.1" y="15.7" width="2.3" height="2.4" fill="#8a8a8a"/><rect x="104.1" y="15.7" width="2.3" height="2.4" fill="#8a8a8a"/></svg>
<div class="m" style="left:152px;top:477.2px;color:#dcdcdc">C-4<span style="color:#5aa8f0">08</span></div>
<svg style="position:absolute;left:152px;top:474px" width="110" height="25"><rect x="54.1" y="15.7" width="2.3" height="2.4" fill="#8a8a8a"/><rect x="64.1" y="15.7" width="2.3" height="2.4" fill="#8a8a8a"/><rect x="74.1" y="15.7" width="2.3" height="2.4" fill="#8a8a8a"/><rect x="84.1" y="15.7" width="2.3" height="2.4" fill="#8a8a8a"/><rect x="94.1" y="15.7" width="2.3" height="2.4" fill="#8a8a8a"/><rect x="104.1" y="15.7" width="2.3" height="2.4" fill="#8a8a8a"/></svg>
<svg style="position:absolute;left:263px;top:474px" width="110" height="25"><rect x="4.1" y="15.7" width="2.3" height="2.4" fill="#8a8a8a"/><rect x="14.1" y="15.7" width="2.3" height="2.4" fill="#8a8a8a"/><rect x="24.1" y="15.7" width="2.3" height="2.4" fill="#8a8a8a"/><rect x="34.1" y="15.7" width="2.3" height="2.4" fill="#8a8a8a"/><rect x="44.1" y="15.7" width="2.3" height="2.4" fill="#8a8a8a"/><rect x="54.1" y="15.7" width="2.3" height="2.4" fill="#8a8a8a"/><rect x="64.1" y="15.7" width="2.3" height="2.4" fill="#8a8a8a"/><rect x="74.1" y="15.7" width="2.3" height="2.4" fill="#8a8a8a"/><rect x="84.1" y="15.7" width="2.3" height="2.4" fill="#8a8a8a"/><rect x="94.1" y="15.7" width="2.3" height="2.4" fill="#8a8a8a"/><rect x="104.1" y="15.7" width="2.3" height="2.4" fill="#8a8a8a"/></svg>
<svg style="position:absolute;left:374px;top:474px" width="110" height="25"><rect x="4.1" y="15.7" width="2.3" height="2.4" fill="#8a8a8a"/><rect x="14.1" y="15.7" width="2.3" height="2.4" fill="#8a8a8a"/><rect x="24.1" y="15.7" width="2.3" height="2.4" fill="#8a8a8a"/><rect x="34.1" y="15.7" width="2.3" height="2.4" fill="#8a8a8a"/><rect x="44.1" y="15.7" width="2.3" height="2.4" fill="#8a8a8a"/><rect x="54.1" y="15.7" width="2.3" height="2.4" fill="#8a8a8a"/><rect x="64.1" y="15.7" width="2.3" height="2.4" fill="#8a8a8a"/><rect x="74.1" y="15.7" width="2.3" height="2.4" fill="#8a8a8a"/><rect x="84.1" y="15.7" width="2.3" height="2.4" fill="#8a8a8a"/><rect x="94.1" y="15.7" width="2.3" height="2.4" fill="#8a8a8a"/><rect x="104.1" y="15.7" width="2.3" height="2.4" fill="#8a8a8a"/></svg>
<div style="left:41px;top:499px;width:443.5px;height:25px;background:#232323;"></div>
<div class="m" style="left:10px;top:502.2px;color:#80ccff">20</div>
<svg style="position:absolute;left:41px;top:499px" width="110" height="25"><rect x="4.1" y="15.7" width="2.3" height="2.4" fill="#8a8a8a"/><rect x="14.1" y="15.7" width="2.3" height="2.4" fill="#8a8a8a"/><rect x="24.1" y="15.7" width="2.3" height="2.4" fill="#8a8a8a"/><rect x="34.1" y="15.7" width="2.3" height="2.4" fill="#8a8a8a"/><rect x="44.1" y="15.7" width="2.3" height="2.4" fill="#8a8a8a"/><rect x="54.1" y="15.7" width="2.3" height="2.4" fill="#8a8a8a"/><rect x="64.1" y="15.7" width="2.3" height="2.4" fill="#8a8a8a"/><rect x="74.1" y="15.7" width="2.3" height="2.4" fill="#8a8a8a"/><rect x="84.1" y="15.7" width="2.3" height="2.4" fill="#8a8a8a"/><rect x="94.1" y="15.7" width="2.3" height="2.4" fill="#8a8a8a"/><rect x="104.1" y="15.7" width="2.3" height="2.4" fill="#8a8a8a"/></svg>
<div class="m" style="left:152px;top:502.2px;color:#dcdcdc">G-4<span style="color:#5aa8f0">07</span></div>
<svg style="position:absolute;left:152px;top:499px" width="110" height="25"><rect x="54.1" y="15.7" width="2.3" height="2.4" fill="#8a8a8a"/><rect x="64.1" y="15.7" width="2.3" height="2.4" fill="#8a8a8a"/><rect x="74.1" y="15.7" width="2.3" height="2.4" fill="#8a8a8a"/><rect x="84.1" y="15.7" width="2.3" height="2.4" fill="#8a8a8a"/><rect x="94.1" y="15.7" width="2.3" height="2.4" fill="#8a8a8a"/><rect x="104.1" y="15.7" width="2.3" height="2.4" fill="#8a8a8a"/></svg>
<div class="m" style="left:263px;top:502.2px;color:#dcdcdc">C-4<span style="color:#5aa8f0">00</span></div>
<svg style="position:absolute;left:263px;top:499px" width="110" height="25"><rect x="54.1" y="15.7" width="2.3" height="2.4" fill="#8a8a8a"/><rect x="64.1" y="15.7" width="2.3" height="2.4" fill="#8a8a8a"/><rect x="74.1" y="15.7" width="2.3" height="2.4" fill="#8a8a8a"/><rect x="84.1" y="15.7" width="2.3" height="2.4" fill="#8a8a8a"/><rect x="94.1" y="15.7" width="2.3" height="2.4" fill="#8a8a8a"/><rect x="104.1" y="15.7" width="2.3" height="2.4" fill="#8a8a8a"/></svg>
<div class="m" style="left:374px;top:502.2px;color:#dcdcdc">C-5<span style="color:#5aa8f0">09</span></div>
<svg style="position:absolute;left:374px;top:499px" width="110" height="25"><rect x="54.1" y="15.7" width="2.3" height="2.4" fill="#8a8a8a"/><rect x="64.1" y="15.7" width="2.3" height="2.4" fill="#8a8a8a"/><rect x="74.1" y="15.7" width="2.3" height="2.4" fill="#8a8a8a"/><rect x="84.1" y="15.7" width="2.3" height="2.4" fill="#8a8a8a"/><rect x="94.1" y="15.7" width="2.3" height="2.4" fill="#8a8a8a"/><rect x="104.1" y="15.7" width="2.3" height="2.4" fill="#8a8a8a"/></svg>
<div class="m" style="left:10px;top:527.2px;color:#80ccff">21</div>
<svg style="position:absolute;left:41px;top:524px" width="110" height="25"><rect x="4.1" y="15.7" width="2.3" height="2.4" fill="#8a8a8a"/><rect x="14.1" y="15.7" width="2.3" height="2.4" fill="#8a8a8a"/><rect x="24.1" y="15.7" width="2.3" height="2.4" fill="#8a8a8a"/><rect x="34.1" y="15.7" width="2.3" height="2.4" fill="#8a8a8a"/><rect x="44.1" y="15.7" width="2.3" height="2.4" fill="#8a8a8a"/><rect x="54.1" y="15.7" width="2.3" height="2.4" fill="#8a8a8a"/><rect x="64.1" y="15.7" width="2.3" height="2.4" fill="#8a8a8a"/><rect x="74.1" y="15.7" width="2.3" height="2.4" fill="#8a8a8a"/><rect x="84.1" y="15.7" width="2.3" height="2.4" fill="#8a8a8a"/><rect x="94.1" y="15.7" width="2.3" height="2.4" fill="#8a8a8a"/><rect x="104.1" y="15.7" width="2.3" height="2.4" fill="#8a8a8a"/></svg>
<div class="m" style="left:152px;top:527.2px;color:#dcdcdc">E-4<span style="color:#5aa8f0">08</span></div>
<svg style="position:absolute;left:152px;top:524px" width="110" height="25"><rect x="54.1" y="15.7" width="2.3" height="2.4" fill="#8a8a8a"/><rect x="64.1" y="15.7" width="2.3" height="2.4" fill="#8a8a8a"/><rect x="74.1" y="15.7" width="2.3" height="2.4" fill="#8a8a8a"/><rect x="84.1" y="15.7" width="2.3" height="2.4" fill="#8a8a8a"/><rect x="94.1" y="15.7" width="2.3" height="2.4" fill="#8a8a8a"/><rect x="104.1" y="15.7" width="2.3" height="2.4" fill="#8a8a8a"/></svg>
<svg style="position:absolute;left:263px;top:524px" width="110" height="25"><rect x="4.1" y="15.7" width="2.3" height="2.4" fill="#8a8a8a"/><rect x="14.1" y="15.7" width="2.3" height="2.4" fill="#8a8a8a"/><rect x="24.1" y="15.7" width="2.3" height="2.4" fill="#8a8a8a"/><rect x="34.1" y="15.7" width="2.3" height="2.4" fill="#8a8a8a"/><rect x="44.1" y="15.7" width="2.3" height="2.4" fill="#8a8a8a"/><rect x="54.1" y="15.7" width="2.3" height="2.4" fill="#8a8a8a"/><rect x="64.1" y="15.7" width="2.3" height="2.4" fill="#8a8a8a"/><rect x="74.1" y="15.7" width="2.3" height="2.4" fill="#8a8a8a"/><rect x="84.1" y="15.7" width="2.3" height="2.4" fill="#8a8a8a"/><rect x="94.1" y="15.7" width="2.3" height="2.4" fill="#8a8a8a"/><rect x="104.1" y="15.7" width="2.3" height="2.4" fill="#8a8a8a"/></svg>
<svg style="position:absolute;left:374px;top:524px" width="110" height="25"><rect x="4.1" y="15.7" width="2.3" height="2.4" fill="#8a8a8a"/><rect x="14.1" y="15.7" width="2.3" height="2.4" fill="#8a8a8a"/><rect x="24.1" y="15.7" width="2.3" height="2.4" fill="#8a8a8a"/><rect x="34.1" y="15.7" width="2.3" height="2.4" fill="#8a8a8a"/><rect x="44.1" y="15.7" width="2.3" height="2.4" fill="#8a8a8a"/><rect x="54.1" y="15.7" width="2.3" height="2.4" fill="#8a8a8a"/><rect x="64.1" y="15.7" width="2.3" height="2.4" fill="#8a8a8a"/><rect x="74.1" y="15.7" width="2.3" height="2.4" fill="#8a8a8a"/><rect x="84.1" y="15.7" width="2.3" height="2.4" fill="#8a8a8a"/><rect x="94.1" y="15.7" width="2.3" height="2.4" fill="#8a8a8a"/><rect x="104.1" y="15.7" width="2.3" height="2.4" fill="#8a8a8a"/></svg>
</div>
<div style="left:41px;top:452px;width:1px;height:533px;background:#3a3a3a;"></div>
<div style="left:152px;top:452px;width:1px;height:533px;background:#3a3a3a;"></div>
<div style="left:263px;top:452px;width:1px;height:533px;background:#3a3a3a;"></div>
<div style="left:374px;top:452px;width:1px;height:533px;background:#3a3a3a;"></div>
<div style="left:485px;top:452px;width:1px;height:533px;background:#3a3a3a;"></div>
<div style="left:963px;top:415px;width:11px;height:179px;background:#4f4f4f;border-radius:5.5px;"></div>
<div style="left:978px;top:329px;width:646.5px;height:29px;background:#0c0c0c;"></div>
<svg style="position:absolute;left:989px;top:336.2px;" width="15" height="17" viewBox="0 0 15 17"><rect x="0" y="0" width="14.5" height="3.5" fill="#fff"/><path d="M0 7 H14.5 L7.25 15.8 Z" fill="#fff"/></svg>
<div style="left:1012.8px;top:331.2px;width:111.3px;height:26px;background:#1a4a80;border-radius:7px 7px 0 0;"></div>
<div class="s" style="left:1016.4px;top:335.8px;color:#f0f0f0;letter-spacing:0.090px;">Effect List</div>
<svg style="position:absolute;left:1599.7px;top:337.1px;" width="14.5" height="14.5" viewBox="0 0 14.5 14.5"><path d="M0.5 0.5 L14.0 14.0 M14.0 0.5 L0.5 14.0" stroke="#f0f0f0" stroke-width="1.2"/></svg>
<div style="left:978px;top:357px;width:646.5px;height:2px;background:#16375c;"></div>
<div class="s" style="left:988.4px;top:370.8px;color:#f0f0f0;letter-spacing:0.026px;">Chip at cursor: Game Boy</div>
<div style="left:989px;top:396px;width:418.5px;height:28.3px;background:#172840;border-radius:6px;"></div>
<div class="s" style="left:1412.7px;top:402.0px;color:#f0f0f0;letter-spacing:0.100px;">Search</div>
<div style="left:1476.3px;top:396px;width:29.3px;height:28.3px;background:#173b60;border-radius:6px;"></div>
<svg style="position:absolute;left:1476.3px;top:396px;" width="29.3" height="28.3" viewBox="0 0 29.3 28.3"><path d="M5.5 8.3 H22.8 M5.5 13.8 H22.8 M5.5 19.3 H22.8" stroke="#fff" stroke-width="2.6"/></svg>
<div style="left:989px;top:429px;width:608px;height:26.3px;background:#303030;"></div>
<div style="left:989px;top:455px;width:608px;height:1px;background:#4a4a52;"></div>
<div class="s" style="left:988.4px;top:433.7px;color:#f0f0f0;letter-spacing:0.313px;">Name Description</div>
<div class="m" style="left:989px;top:460.2px;color:#f0f000;">01xx</div>
<div class="s" style="left:1038.7px;top:459.2px;color:#f0f0f0;letter-spacing:0.315px;">Pitch slide up</div>
<div class="m" style="left:989px;top:486.2px;color:#f0f000;">02xx</div>
<div class="s" style="left:1038.7px;top:485.2px;color:#f0f0f0;letter-spacing:0.353px;">Pitch slide down</div>
<div class="m" style="left:989px;top:512.2px;color:#f0f000;">03xx</div>
<div class="s" style="left:1038.7px;top:511.2px;color:#f0f0f0;letter-spacing:0.500px;">Portamento</div>
<div class="m" style="left:989px;top:538.2px;color:#f0f000;">04xy</div>
<div class="s" style="left:1039.7px;top:537.2px;color:#f0f0f0;letter-spacing:0.152px;">Vibrato (x: speed; y: depth)</div>
<div class="m" style="left:989px;top:564.2px;color:#10e010;">05xy</div>
<div class="s" style="left:1039.7px;top:563.2px;color:#f0f0f0;letter-spacing:0.281px;">Volume slide + vibrato (compatibility only!)</div>
<div class="m" style="left:989px;top:590.2px;color:#10e010;">06xy</div>
<div class="s" style="left:1039.7px;top:589.2px;color:#f0f0f0;letter-spacing:0.326px;">Volume slide + portamento (compatibility only!)</div>
<div class="m" style="left:989px;top:616.2px;color:#10e010;">07xy</div>
<div class="s" style="left:1039.7px;top:615.2px;color:#f0f0f0;letter-spacing:0.174px;">Tremolo (x: speed; y: depth)</div>
<div class="m" style="left:989px;top:642.2px;color:#18d8f0;">08xy</div>
<div class="s" style="left:1038.7px;top:641.2px;color:#f0f0f0;letter-spacing:0.237px;">Set panning (x: left; y: right)</div>
<div class="m" style="left:989px;top:668.2px;color:#f020f0;">09xx</div>
<div class="s" style="left:1038.7px;top:667.2px;color:#f0f0f0;letter-spacing:0.045px;">Set groove pattern (speed 1 if no grooves exist)</div>
<div class="m" style="left:989px;top:694.2px;color:#10e010;">0Axy</div>
<div class="s" style="left:1039.7px;top:693.2px;color:#f0f0f0;letter-spacing:0.227px;">Volume slide (0y: down; x0: up)</div>
<div class="m" style="left:989px;top:720.2px;color:#ff2020;">0Bxx</div>
<div class="s" style="left:1039.7px;top:719.2px;color:#f0f0f0;letter-spacing:0.421px;">Jump to pattern</div>
<div class="m" style="left:989px;top:746.2px;color:#8020ff;">0Cxx</div>
<div class="s" style="left:1038.7px;top:745.2px;color:#f0f0f0;letter-spacing:0.150px;">Retrigger</div>
<div class="m" style="left:989px;top:772.2px;color:#ff2020;">0Dxx</div>
<div class="s" style="left:1039.7px;top:771.2px;color:#f0f0f0;letter-spacing:0.411px;">Jump to next pattern</div>
<div class="m" style="left:989px;top:798.2px;color:#f020f0;">0Fxx</div>
<div class="s" style="left:1038.7px;top:797.2px;color:#f0f0f0;letter-spacing:-0.005px;">Set speed (speed 2 if no grooves exist)</div>
<div class="m" style="left:989px;top:824.2px;color:#80f010;">10xx</div>
<div class="s" style="left:1038.7px;top:823.2px;color:#f0f0f0;letter-spacing:0.100px;">Set waveform</div>
<div class="m" style="left:989px;top:850.2px;color:#80f010;">11xx</div>
<div class="s" style="left:1038.7px;top:849.2px;color:#f0f0f0;letter-spacing:0.206px;">Set noise length (0: long; 1: short)</div>
<div class="m" style="left:989px;top:876.2px;color:#80f010;">12xx</div>
<div class="s" style="left:1038.7px;top:875.2px;color:#f0f0f0;letter-spacing:0.232px;">Set duty cycle (0 to 3)</div>
<div class="m" style="left:989px;top:902.2px;color:#80f010;">13xy</div>
<div class="s" style="left:1038.7px;top:901.2px;color:#f0f0f0;letter-spacing:0.193px;">Setup sweep (x: time; y: shift)</div>
<div class="m" style="left:989px;top:928.2px;color:#80f010;">14xx</div>
<div class="s" style="left:1038.7px;top:927.2px;color:#f0f0f0;letter-spacing:0.231px;">Set sweep direction (0: up; 1: down)</div>
<div class="m" style="left:989px;top:954.2px;color:#18d8f0;">80xx</div>
<div class="s" style="left:1038.7px;top:953.2px;color:#f0f0f0;letter-spacing:0.223px;">Set panning (00: left; 80: center; FF: right)</div>
<div style="left:1600px;top:441.6px;width:10.7px;height:179px;background:#4f4f4f;border-radius:5.35px;"></div>
<div style="left:1627px;top:331px;width:30px;height:653px;background:#172840;border-radius:3px 4px 5px 5px;"></div>
<div style="left:1627px;top:331px;width:2px;height:13px;background:#1b3a60;"></div>
<div style="left:1627px;top:331px;width:14px;height:1.5px;background:#1b3a60;"></div>
</div></body></html>
